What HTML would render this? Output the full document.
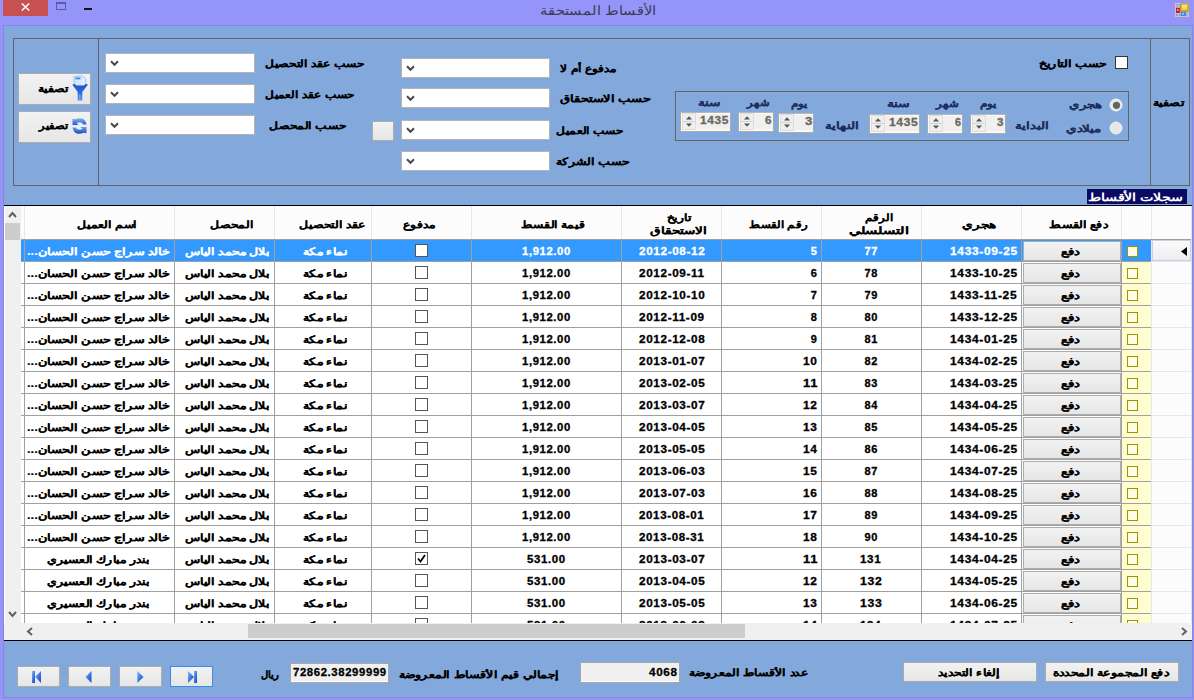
<!DOCTYPE html>
<html><head><meta charset="utf-8"><style>
html,body{margin:0;padding:0;}
body{width:1194px;height:700px;position:relative;overflow:hidden;background:#9595f9;font-family:'Liberation Sans',sans-serif;}
.t{position:absolute;white-space:nowrap;direction:rtl;line-height:20px;transform-origin:0 0;-webkit-text-stroke:0.12px currentColor;}
</style></head><body>
<div style="position:absolute;left:3px;top:0px;width:45px;height:16px;background:#c75050"></div><svg style="position:absolute;left:21px;top:3px" width="9" height="8" viewBox="0 0 9 8"><path d="M0.8 0.5 L8.2 7.5 M8.2 0.5 L0.8 7.5" stroke="#fff" stroke-width="1.5"/></svg><div style="position:absolute;left:56px;top:2px;width:10px;height:8px;border:1px solid #5a5aa8;border-top-width:2px;box-sizing:border-box"></div><div style="position:absolute;left:84px;top:8px;width:8px;height:2px;background:#111"></div><div class="t" style="left:539.67px;top:1.00px;font-size:13px;font-weight:normal;color:#3c3c50;transform:scaleX(1.1317);-webkit-text-stroke:0;">الأقساط المستحقة</div><svg style="position:absolute;left:1175px;top:3px" width="14" height="14" viewBox="0 0 14 14">
<defs><linearGradient id="ay" x1="0" x2="0" y1="0" y2="1"><stop offset="0" stop-color="#fff0a0"/><stop offset="1" stop-color="#f5c418"/></linearGradient></defs>
<rect x="0.5" y="0.5" width="13" height="13" fill="none" stroke="#c9c6b4" stroke-width="1"/>
<line x1="3.5" y1="0.5" x2="3.5" y2="13.5" stroke="#c9c6b4"/><line x1="0.5" y1="3" x2="5" y2="3" stroke="#c9c6b4"/>
<line x1="0.5" y1="10.5" x2="13.5" y2="10.5" stroke="#c9c6b4"/><line x1="12" y1="9" x2="12" y2="13.5" stroke="#c9c6b4"/>
<rect x="6" y="1" width="7" height="7" fill="url(#ay)" stroke="#c09a10" stroke-width="1.2"/>
<rect x="1" y="5" width="3.8" height="5" fill="#c81c1c"/><rect x="2" y="6" width="1.5" height="2" fill="#f0a0a0"/>
<rect x="6" y="9" width="5" height="4" fill="#4a88e0"/><rect x="7" y="10" width="2" height="1.5" fill="#a0c8f8"/>
</svg><div style="position:absolute;left:3px;top:25px;width:1190px;height:673px;background:#8686e2"></div><div style="position:absolute;left:4px;top:26px;width:1188px;height:671px;background:#83a8dc"></div><div style="position:absolute;left:13px;top:38px;width:1177px;height:148px;border:1px solid #646464;box-sizing:border-box"></div><div style="position:absolute;left:98px;top:38px;width:1px;height:148px;background:#646464"></div><div style="position:absolute;left:1150px;top:38px;width:1px;height:148px;background:#646464"></div><div style="position:absolute;left:18px;top:73px;width:73px;height:32px;background:linear-gradient(#f2f2f2,#e6e6e6);border:1px solid #acacac;box-sizing:border-box"></div><div style="position:absolute;left:18px;top:111px;width:73px;height:32px;background:linear-gradient(#f2f2f2,#e6e6e6);border:1px solid #acacac;box-sizing:border-box"></div><div class="t" style="left:38.00px;top:79.00px;font-size:10px;font-weight:bold;color:#000;transform:scaleX(1.2400);">تصفية</div><div class="t" style="left:39.13px;top:115.50px;font-size:10px;font-weight:bold;color:#000;transform:scaleX(1.1296);">تصفير</div><svg style="position:absolute;left:72px;top:75px" width="17" height="26" viewBox="0 0 17 26">
<defs><linearGradient id="fg" x1="0" x2="0" y1="0" y2="1"><stop offset="0" stop-color="#1d55c8"/><stop offset="0.6" stop-color="#2f6ee0"/><stop offset="1" stop-color="#5a95ee"/></linearGradient>
<linearGradient id="fd" x1="0" x2="1"><stop offset="0" stop-color="#cfe2fb"/><stop offset="1" stop-color="#e8f1fd"/></linearGradient></defs>
<path d="M2 1.5 L10 0.8 L13.8 4 L13.8 11 L2 11 Z" fill="url(#fd)" stroke="#9cc4f5" stroke-width="1"/>
<rect x="3.5" y="2.5" width="5" height="1.8" fill="#3f86ec"/>
<path d="M0.3 9.5 L3 9 L4 10.5 L12 10.5 L13.5 9 L16 9.5 L10.3 17 L10.3 25.5 L5.7 25.5 L5.7 17 Z" fill="url(#fg)"/>
<rect x="7" y="19" width="1.5" height="5" fill="#7fb0f4" opacity="0.7"/>
</svg><svg style="position:absolute;left:72px;top:118px" width="15" height="16" viewBox="0 0 15 16">
<defs><linearGradient id="rg1" x1="0" x2="0" y1="0" y2="1"><stop offset="0" stop-color="#8ab8f4"/><stop offset="1" stop-color="#1f5ad0"/></linearGradient>
<linearGradient id="rg2" x1="0" x2="0" y1="0" y2="1"><stop offset="0" stop-color="#6a9eee"/><stop offset="1" stop-color="#1a4cc0"/></linearGradient></defs>
<path d="M0.5 0.8 L3.5 1.3 Q6 -0.2 9.5 0.3 Q13.5 1.2 14.5 6.5 L11.3 6.5 Q10 4.3 7.2 4.3 Q5.2 4.4 4.6 5.6 L6.8 7 L0.5 7 Z" fill="url(#rg1)"/>
<path d="M14.5 15.2 L11.5 14.7 Q9 16.2 5.5 15.7 Q1.5 14.8 0.5 9.5 L3.7 9.5 Q5 11.7 7.8 11.7 Q9.8 11.6 10.4 10.4 L8.2 9 L14.5 9 Z" fill="url(#rg2)"/>
</svg><div style="position:absolute;left:105px;top:53px;width:150px;height:20px;background:#fff;border:1px solid #b4b4b4;box-sizing:border-box"></div><svg style="position:absolute;left:110px;top:60px" width="9" height="7" viewBox="0 0 9 7"><path d="M1 1.2 L4.5 4.8 L8 1.2" fill="none" stroke="#4a4a4a" stroke-width="2"/></svg><div style="position:absolute;left:105px;top:84px;width:150px;height:20px;background:#fff;border:1px solid #b4b4b4;box-sizing:border-box"></div><svg style="position:absolute;left:110px;top:91px" width="9" height="7" viewBox="0 0 9 7"><path d="M1 1.2 L4.5 4.8 L8 1.2" fill="none" stroke="#4a4a4a" stroke-width="2"/></svg><div style="position:absolute;left:105px;top:115px;width:150px;height:20px;background:#fff;border:1px solid #b4b4b4;box-sizing:border-box"></div><svg style="position:absolute;left:110px;top:122px" width="9" height="7" viewBox="0 0 9 7"><path d="M1 1.2 L4.5 4.8 L8 1.2" fill="none" stroke="#4a4a4a" stroke-width="2"/></svg><div class="t" style="left:264.60px;top:54.00px;font-size:10px;font-weight:bold;color:#000;transform:scaleX(1.2171);">حسب عقد التحصيل</div><div class="t" style="left:264.60px;top:85.00px;font-size:10px;font-weight:bold;color:#000;transform:scaleX(1.2027);">حسب عقد العميل</div><div class="t" style="left:268.60px;top:116.00px;font-size:10px;font-weight:bold;color:#000;transform:scaleX(1.2254);">حسب المحصل</div><div style="position:absolute;left:372px;top:121px;width:22px;height:20px;background:linear-gradient(#f2f2f2,#e6e6e6);border:1px solid #acacac;box-sizing:border-box"></div><div style="position:absolute;left:401px;top:58px;width:149px;height:20px;background:#fff;border:1px solid #b4b4b4;box-sizing:border-box"></div><svg style="position:absolute;left:406px;top:65px" width="9" height="7" viewBox="0 0 9 7"><path d="M1 1.2 L4.5 4.8 L8 1.2" fill="none" stroke="#4a4a4a" stroke-width="2"/></svg><div style="position:absolute;left:401px;top:88px;width:149px;height:20px;background:#fff;border:1px solid #b4b4b4;box-sizing:border-box"></div><svg style="position:absolute;left:406px;top:95px" width="9" height="7" viewBox="0 0 9 7"><path d="M1 1.2 L4.5 4.8 L8 1.2" fill="none" stroke="#4a4a4a" stroke-width="2"/></svg><div style="position:absolute;left:401px;top:120px;width:149px;height:20px;background:#fff;border:1px solid #b4b4b4;box-sizing:border-box"></div><svg style="position:absolute;left:406px;top:127px" width="9" height="7" viewBox="0 0 9 7"><path d="M1 1.2 L4.5 4.8 L8 1.2" fill="none" stroke="#4a4a4a" stroke-width="2"/></svg><div style="position:absolute;left:401px;top:151px;width:149px;height:20px;background:#fff;border:1px solid #b4b4b4;box-sizing:border-box"></div><svg style="position:absolute;left:406px;top:158px" width="9" height="7" viewBox="0 0 9 7"><path d="M1 1.2 L4.5 4.8 L8 1.2" fill="none" stroke="#4a4a4a" stroke-width="2"/></svg><div class="t" style="left:560.30px;top:59.00px;font-size:10px;font-weight:bold;color:#000;transform:scaleX(1.2106);">مدفوع أم لا</div><div class="t" style="left:560.20px;top:89.00px;font-size:10px;font-weight:bold;color:#000;transform:scaleX(1.3014);">حسب الاستحقاق</div><div class="t" style="left:555.50px;top:120.50px;font-size:10px;font-weight:bold;color:#000;transform:scaleX(1.2107);">حسب العميل</div><div class="t" style="left:555.50px;top:151.70px;font-size:10px;font-weight:bold;color:#000;transform:scaleX(1.2576);">حسب الشركة</div><div style="position:absolute;left:1115px;top:56px;width:13px;height:13px;background:#fff;border:1px solid #333;box-sizing:border-box"></div><div class="t" style="left:1038.60px;top:54.00px;font-size:10px;font-weight:bold;color:#000;transform:scaleX(1.2574);">حسب التاريخ</div><div class="t" style="left:1153.30px;top:93.00px;font-size:10px;font-weight:bold;color:#000;transform:scaleX(1.2560);">تصفية</div><div style="position:absolute;left:675px;top:91px;width:454px;height:50px;border:1px solid #646464;box-sizing:border-box"></div><svg style="position:absolute;left:1109px;top:98px" width="14" height="14" viewBox="0 0 14 14">
<circle cx="7" cy="7" r="6" fill="#e8e8e8" stroke="#f4f4f4" stroke-width="1"/><circle cx="7.5" cy="7.3" r="3.6" fill="#626262"/></svg><svg style="position:absolute;left:1109px;top:121px" width="14" height="14" viewBox="0 0 14 14">
<circle cx="7" cy="7" r="6" fill="#e6e6e6" stroke="#f0f0f0" stroke-width="1"/></svg><div class="t" style="left:1069.30px;top:95.30px;font-size:10px;font-weight:bold;color:#1e2d5a;transform:scaleX(1.3200);">هجري</div><div class="t" style="left:1066.40px;top:119.00px;font-size:10px;font-weight:bold;color:#1e2d5a;transform:scaleX(1.3500);">ميلادي</div><div class="t" style="left:1015.00px;top:116.00px;font-size:10px;font-weight:bold;color:#1e2d5a;transform:scaleX(1.3458);">البداية</div><div class="t" style="left:825.00px;top:116.00px;font-size:10px;font-weight:bold;color:#1e2d5a;transform:scaleX(1.3458);">النهاية</div><div style="position:absolute;left:970px;top:114px;width:36px;height:20px;background:#f0f0f0;border:1px solid #ababab;border-top-color:#b8b8b8;box-shadow:inset 1px 1px 0 #fbfbfb, inset 0 -2px 0 #fafafa;box-sizing:border-box"></div><svg style="position:absolute;left:972px;top:115px" width="14" height="17" viewBox="0 0 14 17"><rect x="0.5" y="0.5" width="13" height="16" fill="#efefef" stroke="#dedede"/><line x1="1" y1="8.5" x2="13" y2="8.5" stroke="#d4d4d4"/><path d="M4 6.5 L7 3.3 L10 6.5 Z" fill="#555"/><path d="M4 10.5 L7 13.7 L10 10.5 Z" fill="#555"/></svg><div class="t" style="left:997.40px;top:112.00px;font-size:11px;font-weight:bold;letter-spacing:0.6px;-webkit-text-stroke:0.3px currentColor;color:#6b675f;transform:scaleX(1.0500);">3</div><div style="position:absolute;left:927px;top:114px;width:36px;height:20px;background:#f0f0f0;border:1px solid #ababab;border-top-color:#b8b8b8;box-shadow:inset 1px 1px 0 #fbfbfb, inset 0 -2px 0 #fafafa;box-sizing:border-box"></div><svg style="position:absolute;left:929px;top:115px" width="14" height="17" viewBox="0 0 14 17"><rect x="0.5" y="0.5" width="13" height="16" fill="#efefef" stroke="#dedede"/><line x1="1" y1="8.5" x2="13" y2="8.5" stroke="#d4d4d4"/><path d="M4 6.5 L7 3.3 L10 6.5 Z" fill="#555"/><path d="M4 10.5 L7 13.7 L10 10.5 Z" fill="#555"/></svg><div class="t" style="left:954.60px;top:112.00px;font-size:11px;font-weight:bold;letter-spacing:0.6px;-webkit-text-stroke:0.3px currentColor;color:#6b675f;transform:scaleX(0.9833);">6</div><div style="position:absolute;left:869px;top:114px;width:51px;height:20px;background:#f0f0f0;border:1px solid #ababab;border-top-color:#b8b8b8;box-shadow:inset 1px 1px 0 #fbfbfb, inset 0 -2px 0 #fafafa;box-sizing:border-box"></div><svg style="position:absolute;left:871px;top:115px" width="14" height="17" viewBox="0 0 14 17"><rect x="0.5" y="0.5" width="13" height="16" fill="#efefef" stroke="#dedede"/><line x1="1" y1="8.5" x2="13" y2="8.5" stroke="#d4d4d4"/><path d="M4 6.5 L7 3.3 L10 6.5 Z" fill="#555"/><path d="M4 10.5 L7 13.7 L10 10.5 Z" fill="#555"/></svg><div class="t" style="left:889.41px;top:112.00px;font-size:11px;font-weight:bold;letter-spacing:0.6px;-webkit-text-stroke:0.3px currentColor;color:#6b675f;transform:scaleX(1.0920);">1435</div><div class="t" style="left:979.80px;top:94.00px;font-size:10px;font-weight:bold;color:#1e2d5a;transform:scaleX(1.1929);">يوم</div><div class="t" style="left:935.67px;top:94.00px;font-size:10px;font-weight:bold;color:#1e2d5a;transform:scaleX(1.1750);">شهر</div><div class="t" style="left:887.00px;top:94.00px;font-size:10px;font-weight:bold;color:#1e2d5a;transform:scaleX(1.4000);">سنة</div><div style="position:absolute;left:778px;top:113px;width:36px;height:20px;background:#f0f0f0;border:1px solid #ababab;border-top-color:#b8b8b8;box-shadow:inset 1px 1px 0 #fbfbfb, inset 0 -2px 0 #fafafa;box-sizing:border-box"></div><svg style="position:absolute;left:780px;top:114px" width="14" height="17" viewBox="0 0 14 17"><rect x="0.5" y="0.5" width="13" height="16" fill="#efefef" stroke="#dedede"/><line x1="1" y1="8.5" x2="13" y2="8.5" stroke="#d4d4d4"/><path d="M4 6.5 L7 3.3 L10 6.5 Z" fill="#555"/><path d="M4 10.5 L7 13.7 L10 10.5 Z" fill="#555"/></svg><div class="t" style="left:804.80px;top:111.00px;font-size:11px;font-weight:bold;letter-spacing:0.6px;-webkit-text-stroke:0.3px currentColor;color:#6b675f;transform:scaleX(1.2000);">3</div><div style="position:absolute;left:738px;top:112px;width:36px;height:20px;background:#f0f0f0;border:1px solid #ababab;border-top-color:#b8b8b8;box-shadow:inset 1px 1px 0 #fbfbfb, inset 0 -2px 0 #fafafa;box-sizing:border-box"></div><svg style="position:absolute;left:740px;top:113px" width="14" height="17" viewBox="0 0 14 17"><rect x="0.5" y="0.5" width="13" height="16" fill="#efefef" stroke="#dedede"/><line x1="1" y1="8.5" x2="13" y2="8.5" stroke="#d4d4d4"/><path d="M4 6.5 L7 3.3 L10 6.5 Z" fill="#555"/><path d="M4 10.5 L7 13.7 L10 10.5 Z" fill="#555"/></svg><div class="t" style="left:765.00px;top:110.40px;font-size:11px;font-weight:bold;letter-spacing:0.6px;-webkit-text-stroke:0.3px currentColor;color:#6b675f;transform:scaleX(1.0500);">6</div><div style="position:absolute;left:680px;top:112px;width:51px;height:20px;background:#f0f0f0;border:1px solid #ababab;border-top-color:#b8b8b8;box-shadow:inset 1px 1px 0 #fbfbfb, inset 0 -2px 0 #fafafa;box-sizing:border-box"></div><svg style="position:absolute;left:682px;top:113px" width="14" height="17" viewBox="0 0 14 17"><rect x="0.5" y="0.5" width="13" height="16" fill="#efefef" stroke="#dedede"/><line x1="1" y1="8.5" x2="13" y2="8.5" stroke="#d4d4d4"/><path d="M4 6.5 L7 3.3 L10 6.5 Z" fill="#555"/><path d="M4 10.5 L7 13.7 L10 10.5 Z" fill="#555"/></svg><div class="t" style="left:700.42px;top:110.40px;font-size:11px;font-weight:bold;letter-spacing:0.6px;-webkit-text-stroke:0.3px currentColor;color:#6b675f;transform:scaleX(1.0840);">1435</div><div class="t" style="left:791.00px;top:93.50px;font-size:10px;font-weight:bold;color:#1e2d5a;transform:scaleX(1.1714);">يوم</div><div class="t" style="left:747.15px;top:93.40px;font-size:10px;font-weight:bold;color:#1e2d5a;transform:scaleX(1.1500);">شهر</div><div class="t" style="left:698.00px;top:93.00px;font-size:10px;font-weight:bold;color:#1e2d5a;transform:scaleX(1.3750);">سنة</div><div style="position:absolute;left:1087px;top:189px;width:100px;height:15px;background:#0a0a62"></div><div class="t" style="left:1087.70px;top:187.00px;font-size:11px;font-weight:bold;-webkit-text-stroke:0;color:#fff;transform:scaleX(1.3000);">سجلات الأقساط</div><div style="position:absolute;left:4px;top:205px;width:1188px;height:1px;background:#000"></div><div style="position:absolute;left:4px;top:206px;width:1188px;height:433px;background:#fff"></div><div style="position:absolute;left:4px;top:206px;width:17px;height:417px;background:#f0f0f0;border-left:1px solid #fff;box-sizing:border-box"></div><svg style="position:absolute;left:8px;top:211px" width="9" height="7" viewBox="0 0 9 7"><path d="M1 6 L4.5 2 L8 6" fill="none" stroke="#606060" stroke-width="2"/></svg><div style="position:absolute;left:5px;top:223px;width:15px;height:17px;background:#cdcdcd"></div><svg style="position:absolute;left:8px;top:611px" width="9" height="7" viewBox="0 0 9 7"><path d="M1 1 L4.5 5 L8 1" fill="none" stroke="#606060" stroke-width="2"/></svg><div style="position:absolute;left:21px;top:206px;width:1171px;height:33px;background:#fcfcfc"></div><div style="position:absolute;left:24px;top:206px;width:1px;height:33px;background:#dfe8f3"></div><div style="position:absolute;left:174px;top:206px;width:1px;height:33px;background:#dfe8f3"></div><div style="position:absolute;left:274px;top:206px;width:1px;height:33px;background:#dfe8f3"></div><div style="position:absolute;left:371px;top:206px;width:1px;height:33px;background:#dfe8f3"></div><div style="position:absolute;left:471px;top:206px;width:1px;height:33px;background:#dfe8f3"></div><div style="position:absolute;left:621px;top:206px;width:1px;height:33px;background:#dfe8f3"></div><div style="position:absolute;left:721px;top:206px;width:1px;height:33px;background:#dfe8f3"></div><div style="position:absolute;left:821px;top:206px;width:1px;height:33px;background:#dfe8f3"></div><div style="position:absolute;left:921px;top:206px;width:1px;height:33px;background:#dfe8f3"></div><div style="position:absolute;left:1021px;top:206px;width:1px;height:33px;background:#dfe8f3"></div><div style="position:absolute;left:1121px;top:206px;width:1px;height:33px;background:#dfe8f3"></div><div style="position:absolute;left:1151px;top:206px;width:1px;height:33px;background:#dfe8f3"></div><div style="position:absolute;left:21px;top:239px;width:1171px;height:1px;background:#a0a0a0"></div><div class="t" style="left:76.60px;top:215.00px;font-size:10px;font-weight:bold;color:#000;transform:scaleX(1.2312);">اسم العميل</div><div class="t" style="left:210.40px;top:215.00px;font-size:10px;font-weight:bold;color:#000;transform:scaleX(1.2382);">المحصل</div><div class="t" style="left:299.40px;top:215.00px;font-size:10px;font-weight:bold;color:#000;transform:scaleX(1.2377);">عقد التحصيل</div><div class="t" style="left:403.40px;top:215.00px;font-size:10px;font-weight:bold;color:#000;transform:scaleX(1.2346);">مدفوع</div><div class="t" style="left:521.00px;top:215.00px;font-size:10px;font-weight:bold;color:#000;transform:scaleX(1.2308);">قيمة القسط</div><div class="t" style="left:666.80px;top:208.00px;font-size:10px;font-weight:bold;color:#000;transform:scaleX(1.2250);">تاريخ</div><div class="t" style="left:650.40px;top:221.00px;font-size:10px;font-weight:bold;color:#000;transform:scaleX(1.3561);">الاستحقاق</div><div class="t" style="left:749.00px;top:215.00px;font-size:10px;font-weight:bold;color:#000;transform:scaleX(1.1740);">رقم القسط</div><div class="t" style="left:864.80px;top:208.00px;font-size:10px;font-weight:bold;color:#000;transform:scaleX(1.1783);">الرقم</div><div class="t" style="left:849.00px;top:221.00px;font-size:10px;font-weight:bold;color:#000;transform:scaleX(1.4625);">التسلسلي</div><div class="t" style="left:961.60px;top:215.00px;font-size:10px;font-weight:bold;color:#000;transform:scaleX(1.3600);">هجري</div><div class="t" style="left:1049.00px;top:215.00px;font-size:10px;font-weight:bold;color:#000;transform:scaleX(1.2553);">دفع القسط</div><div style="position:absolute;left:0px;top:240px;width:1192px;height:383px;overflow:hidden"><div style="position:absolute;left:0;top:-240px;width:1192px;height:700px"><div style="position:absolute;left:21px;top:240px;width:1130px;height:21px;background:#3399ff"></div><div style="position:absolute;left:1151px;top:240px;width:41px;height:21px;background:#fcfcfc"></div><div style="position:absolute;left:1151px;top:261px;width:41px;height:1px;background:#dfe8f3"></div><div style="position:absolute;left:1151px;top:240px;width:1px;height:22px;background:#dfe8f3"></div><div style="position:absolute;left:21px;top:261px;width:1130px;height:1px;background:#a0a0a0"></div><div style="position:absolute;left:24px;top:240px;width:1px;height:22px;background:#a0a0a0"></div><div style="position:absolute;left:174px;top:240px;width:1px;height:22px;background:#a0a0a0"></div><div style="position:absolute;left:274px;top:240px;width:1px;height:22px;background:#a0a0a0"></div><div style="position:absolute;left:371px;top:240px;width:1px;height:22px;background:#a0a0a0"></div><div style="position:absolute;left:471px;top:240px;width:1px;height:22px;background:#a0a0a0"></div><div style="position:absolute;left:621px;top:240px;width:1px;height:22px;background:#a0a0a0"></div><div style="position:absolute;left:721px;top:240px;width:1px;height:22px;background:#a0a0a0"></div><div style="position:absolute;left:821px;top:240px;width:1px;height:22px;background:#a0a0a0"></div><div style="position:absolute;left:921px;top:240px;width:1px;height:22px;background:#a0a0a0"></div><div style="position:absolute;left:1021px;top:240px;width:1px;height:22px;background:#a0a0a0"></div><div style="position:absolute;left:1121px;top:240px;width:1px;height:22px;background:#a0a0a0"></div><div class="t" style="left:26.71px;top:242.00px;font-size:10px;font-weight:bold;color:#fff;transform:scaleX(1.2873);">خالد سراج حسن الحسان...</div><div class="t" style="left:185.40px;top:242.00px;font-size:10px;font-weight:bold;color:#fff;transform:scaleX(1.2478);">بلال محمد الياس</div><div class="t" style="left:302.50px;top:242.00px;font-size:10px;font-weight:bold;color:#fff;transform:scaleX(1.2429);">نماء مكة</div><div style="position:absolute;left:415px;top:244px;width:13px;height:13px;background:#fff;border:1px solid #555;box-sizing:border-box"></div><div class="t" style="left:521.57px;top:241.00px;font-size:11px;font-weight:bold;letter-spacing:0.6px;-webkit-text-stroke:0.3px currentColor;color:#fff;transform:scaleX(1.0261);">1,912.00</div><div class="t" style="left:638.60px;top:241.00px;font-size:11px;font-weight:bold;letter-spacing:0.6px;-webkit-text-stroke:0.3px currentColor;color:#fff;transform:scaleX(1.0656);">2012-08-12</div><div class="t" style="left:810.70px;top:241.00px;font-size:11px;font-weight:bold;letter-spacing:0.6px;-webkit-text-stroke:0.3px currentColor;color:#fff;transform:scaleX(1.0000);">5</div><div class="t" style="left:864.50px;top:241.00px;font-size:11px;font-weight:bold;letter-spacing:0.6px;-webkit-text-stroke:0.3px currentColor;color:#fff;transform:scaleX(1.0000);">77</div><div class="t" style="left:950.31px;top:241.00px;font-size:11px;font-weight:bold;letter-spacing:0.6px;-webkit-text-stroke:0.3px currentColor;color:#fff;transform:scaleX(1.0900);">1433-09-25</div><div style="position:absolute;left:1023px;top:241px;width:98px;height:20px;background:linear-gradient(#f2f2f2,#e6e6e6);border:1px solid #acacac;box-sizing:border-box"></div><div class="t" style="left:1061.30px;top:242.00px;font-size:10px;font-weight:bold;color:#000;transform:scaleX(1.3357);">دفع</div><div style="position:absolute;left:1127px;top:246px;width:11px;height:11px;background:#fdfde6;border:1.5px solid #9a9a00;box-sizing:border-box"></div><div style="position:absolute;left:1152px;top:240px;width:39px;height:21px;background:linear-gradient(#fbfbfb,#eeeeee);border:1px solid #c8d2de;box-sizing:border-box"></div><svg style="position:absolute;left:1181px;top:247px" width="6" height="9" viewBox="0 0 6 9"><path d="M6 0 L0 4.5 L6 9 Z" fill="#000"/></svg><div style="position:absolute;left:1121px;top:262px;width:30px;height:21px;background:#fffdd0"></div><div style="position:absolute;left:1151px;top:262px;width:41px;height:21px;background:#fcfcfc"></div><div style="position:absolute;left:1151px;top:283px;width:41px;height:1px;background:#dfe8f3"></div><div style="position:absolute;left:1151px;top:262px;width:1px;height:22px;background:#dfe8f3"></div><div style="position:absolute;left:21px;top:283px;width:1130px;height:1px;background:#a0a0a0"></div><div style="position:absolute;left:24px;top:262px;width:1px;height:22px;background:#a0a0a0"></div><div style="position:absolute;left:174px;top:262px;width:1px;height:22px;background:#a0a0a0"></div><div style="position:absolute;left:274px;top:262px;width:1px;height:22px;background:#a0a0a0"></div><div style="position:absolute;left:371px;top:262px;width:1px;height:22px;background:#a0a0a0"></div><div style="position:absolute;left:471px;top:262px;width:1px;height:22px;background:#a0a0a0"></div><div style="position:absolute;left:621px;top:262px;width:1px;height:22px;background:#a0a0a0"></div><div style="position:absolute;left:721px;top:262px;width:1px;height:22px;background:#a0a0a0"></div><div style="position:absolute;left:821px;top:262px;width:1px;height:22px;background:#a0a0a0"></div><div style="position:absolute;left:921px;top:262px;width:1px;height:22px;background:#a0a0a0"></div><div style="position:absolute;left:1021px;top:262px;width:1px;height:22px;background:#a0a0a0"></div><div style="position:absolute;left:1121px;top:262px;width:1px;height:22px;background:#a0a0a0"></div><div class="t" style="left:26.71px;top:264.00px;font-size:10px;font-weight:bold;color:#000;transform:scaleX(1.2873);">خالد سراج حسن الحسان...</div><div class="t" style="left:185.40px;top:264.00px;font-size:10px;font-weight:bold;color:#000;transform:scaleX(1.2478);">بلال محمد الياس</div><div class="t" style="left:302.50px;top:264.00px;font-size:10px;font-weight:bold;color:#000;transform:scaleX(1.2429);">نماء مكة</div><div style="position:absolute;left:415px;top:266px;width:13px;height:13px;background:#fff;border:1px solid #555;box-sizing:border-box"></div><div class="t" style="left:521.57px;top:263.00px;font-size:11px;font-weight:bold;letter-spacing:0.6px;-webkit-text-stroke:0.3px currentColor;color:#000;transform:scaleX(1.0261);">1,912.00</div><div class="t" style="left:638.60px;top:263.00px;font-size:11px;font-weight:bold;letter-spacing:0.6px;-webkit-text-stroke:0.3px currentColor;color:#000;transform:scaleX(1.0656);">2012-09-11</div><div class="t" style="left:810.70px;top:263.00px;font-size:11px;font-weight:bold;letter-spacing:0.6px;-webkit-text-stroke:0.3px currentColor;color:#000;transform:scaleX(1.0000);">6</div><div class="t" style="left:864.50px;top:263.00px;font-size:11px;font-weight:bold;letter-spacing:0.6px;-webkit-text-stroke:0.3px currentColor;color:#000;transform:scaleX(1.0000);">78</div><div class="t" style="left:950.31px;top:263.00px;font-size:11px;font-weight:bold;letter-spacing:0.6px;-webkit-text-stroke:0.3px currentColor;color:#000;transform:scaleX(1.0900);">1433-10-25</div><div style="position:absolute;left:1023px;top:263px;width:98px;height:20px;background:linear-gradient(#f2f2f2,#e6e6e6);border:1px solid #acacac;box-sizing:border-box"></div><div class="t" style="left:1061.30px;top:264.00px;font-size:10px;font-weight:bold;color:#000;transform:scaleX(1.3357);">دفع</div><div style="position:absolute;left:1127px;top:268px;width:11px;height:11px;background:#fdfde6;border:1.5px solid #9a9a00;box-sizing:border-box"></div><div style="position:absolute;left:1121px;top:284px;width:30px;height:21px;background:#fffdd0"></div><div style="position:absolute;left:1151px;top:284px;width:41px;height:21px;background:#fcfcfc"></div><div style="position:absolute;left:1151px;top:305px;width:41px;height:1px;background:#dfe8f3"></div><div style="position:absolute;left:1151px;top:284px;width:1px;height:22px;background:#dfe8f3"></div><div style="position:absolute;left:21px;top:305px;width:1130px;height:1px;background:#a0a0a0"></div><div style="position:absolute;left:24px;top:284px;width:1px;height:22px;background:#a0a0a0"></div><div style="position:absolute;left:174px;top:284px;width:1px;height:22px;background:#a0a0a0"></div><div style="position:absolute;left:274px;top:284px;width:1px;height:22px;background:#a0a0a0"></div><div style="position:absolute;left:371px;top:284px;width:1px;height:22px;background:#a0a0a0"></div><div style="position:absolute;left:471px;top:284px;width:1px;height:22px;background:#a0a0a0"></div><div style="position:absolute;left:621px;top:284px;width:1px;height:22px;background:#a0a0a0"></div><div style="position:absolute;left:721px;top:284px;width:1px;height:22px;background:#a0a0a0"></div><div style="position:absolute;left:821px;top:284px;width:1px;height:22px;background:#a0a0a0"></div><div style="position:absolute;left:921px;top:284px;width:1px;height:22px;background:#a0a0a0"></div><div style="position:absolute;left:1021px;top:284px;width:1px;height:22px;background:#a0a0a0"></div><div style="position:absolute;left:1121px;top:284px;width:1px;height:22px;background:#a0a0a0"></div><div class="t" style="left:26.71px;top:286.00px;font-size:10px;font-weight:bold;color:#000;transform:scaleX(1.2873);">خالد سراج حسن الحسان...</div><div class="t" style="left:185.40px;top:286.00px;font-size:10px;font-weight:bold;color:#000;transform:scaleX(1.2478);">بلال محمد الياس</div><div class="t" style="left:302.50px;top:286.00px;font-size:10px;font-weight:bold;color:#000;transform:scaleX(1.2429);">نماء مكة</div><div style="position:absolute;left:415px;top:288px;width:13px;height:13px;background:#fff;border:1px solid #555;box-sizing:border-box"></div><div class="t" style="left:521.57px;top:285.00px;font-size:11px;font-weight:bold;letter-spacing:0.6px;-webkit-text-stroke:0.3px currentColor;color:#000;transform:scaleX(1.0261);">1,912.00</div><div class="t" style="left:638.60px;top:285.00px;font-size:11px;font-weight:bold;letter-spacing:0.6px;-webkit-text-stroke:0.3px currentColor;color:#000;transform:scaleX(1.0656);">2012-10-10</div><div class="t" style="left:810.70px;top:285.00px;font-size:11px;font-weight:bold;letter-spacing:0.6px;-webkit-text-stroke:0.3px currentColor;color:#000;transform:scaleX(1.0000);">7</div><div class="t" style="left:864.50px;top:285.00px;font-size:11px;font-weight:bold;letter-spacing:0.6px;-webkit-text-stroke:0.3px currentColor;color:#000;transform:scaleX(1.0000);">79</div><div class="t" style="left:950.31px;top:285.00px;font-size:11px;font-weight:bold;letter-spacing:0.6px;-webkit-text-stroke:0.3px currentColor;color:#000;transform:scaleX(1.0900);">1433-11-25</div><div style="position:absolute;left:1023px;top:285px;width:98px;height:20px;background:linear-gradient(#f2f2f2,#e6e6e6);border:1px solid #acacac;box-sizing:border-box"></div><div class="t" style="left:1061.30px;top:286.00px;font-size:10px;font-weight:bold;color:#000;transform:scaleX(1.3357);">دفع</div><div style="position:absolute;left:1127px;top:290px;width:11px;height:11px;background:#fdfde6;border:1.5px solid #9a9a00;box-sizing:border-box"></div><div style="position:absolute;left:1121px;top:306px;width:30px;height:21px;background:#fffdd0"></div><div style="position:absolute;left:1151px;top:306px;width:41px;height:21px;background:#fcfcfc"></div><div style="position:absolute;left:1151px;top:327px;width:41px;height:1px;background:#dfe8f3"></div><div style="position:absolute;left:1151px;top:306px;width:1px;height:22px;background:#dfe8f3"></div><div style="position:absolute;left:21px;top:327px;width:1130px;height:1px;background:#a0a0a0"></div><div style="position:absolute;left:24px;top:306px;width:1px;height:22px;background:#a0a0a0"></div><div style="position:absolute;left:174px;top:306px;width:1px;height:22px;background:#a0a0a0"></div><div style="position:absolute;left:274px;top:306px;width:1px;height:22px;background:#a0a0a0"></div><div style="position:absolute;left:371px;top:306px;width:1px;height:22px;background:#a0a0a0"></div><div style="position:absolute;left:471px;top:306px;width:1px;height:22px;background:#a0a0a0"></div><div style="position:absolute;left:621px;top:306px;width:1px;height:22px;background:#a0a0a0"></div><div style="position:absolute;left:721px;top:306px;width:1px;height:22px;background:#a0a0a0"></div><div style="position:absolute;left:821px;top:306px;width:1px;height:22px;background:#a0a0a0"></div><div style="position:absolute;left:921px;top:306px;width:1px;height:22px;background:#a0a0a0"></div><div style="position:absolute;left:1021px;top:306px;width:1px;height:22px;background:#a0a0a0"></div><div style="position:absolute;left:1121px;top:306px;width:1px;height:22px;background:#a0a0a0"></div><div class="t" style="left:26.71px;top:308.00px;font-size:10px;font-weight:bold;color:#000;transform:scaleX(1.2873);">خالد سراج حسن الحسان...</div><div class="t" style="left:185.40px;top:308.00px;font-size:10px;font-weight:bold;color:#000;transform:scaleX(1.2478);">بلال محمد الياس</div><div class="t" style="left:302.50px;top:308.00px;font-size:10px;font-weight:bold;color:#000;transform:scaleX(1.2429);">نماء مكة</div><div style="position:absolute;left:415px;top:310px;width:13px;height:13px;background:#fff;border:1px solid #555;box-sizing:border-box"></div><div class="t" style="left:521.57px;top:307.00px;font-size:11px;font-weight:bold;letter-spacing:0.6px;-webkit-text-stroke:0.3px currentColor;color:#000;transform:scaleX(1.0261);">1,912.00</div><div class="t" style="left:638.60px;top:307.00px;font-size:11px;font-weight:bold;letter-spacing:0.6px;-webkit-text-stroke:0.3px currentColor;color:#000;transform:scaleX(1.0656);">2012-11-09</div><div class="t" style="left:810.70px;top:307.00px;font-size:11px;font-weight:bold;letter-spacing:0.6px;-webkit-text-stroke:0.3px currentColor;color:#000;transform:scaleX(1.0000);">8</div><div class="t" style="left:864.50px;top:307.00px;font-size:11px;font-weight:bold;letter-spacing:0.6px;-webkit-text-stroke:0.3px currentColor;color:#000;transform:scaleX(1.0000);">80</div><div class="t" style="left:950.31px;top:307.00px;font-size:11px;font-weight:bold;letter-spacing:0.6px;-webkit-text-stroke:0.3px currentColor;color:#000;transform:scaleX(1.0900);">1433-12-25</div><div style="position:absolute;left:1023px;top:307px;width:98px;height:20px;background:linear-gradient(#f2f2f2,#e6e6e6);border:1px solid #acacac;box-sizing:border-box"></div><div class="t" style="left:1061.30px;top:308.00px;font-size:10px;font-weight:bold;color:#000;transform:scaleX(1.3357);">دفع</div><div style="position:absolute;left:1127px;top:312px;width:11px;height:11px;background:#fdfde6;border:1.5px solid #9a9a00;box-sizing:border-box"></div><div style="position:absolute;left:1121px;top:328px;width:30px;height:21px;background:#fffdd0"></div><div style="position:absolute;left:1151px;top:328px;width:41px;height:21px;background:#fcfcfc"></div><div style="position:absolute;left:1151px;top:349px;width:41px;height:1px;background:#dfe8f3"></div><div style="position:absolute;left:1151px;top:328px;width:1px;height:22px;background:#dfe8f3"></div><div style="position:absolute;left:21px;top:349px;width:1130px;height:1px;background:#a0a0a0"></div><div style="position:absolute;left:24px;top:328px;width:1px;height:22px;background:#a0a0a0"></div><div style="position:absolute;left:174px;top:328px;width:1px;height:22px;background:#a0a0a0"></div><div style="position:absolute;left:274px;top:328px;width:1px;height:22px;background:#a0a0a0"></div><div style="position:absolute;left:371px;top:328px;width:1px;height:22px;background:#a0a0a0"></div><div style="position:absolute;left:471px;top:328px;width:1px;height:22px;background:#a0a0a0"></div><div style="position:absolute;left:621px;top:328px;width:1px;height:22px;background:#a0a0a0"></div><div style="position:absolute;left:721px;top:328px;width:1px;height:22px;background:#a0a0a0"></div><div style="position:absolute;left:821px;top:328px;width:1px;height:22px;background:#a0a0a0"></div><div style="position:absolute;left:921px;top:328px;width:1px;height:22px;background:#a0a0a0"></div><div style="position:absolute;left:1021px;top:328px;width:1px;height:22px;background:#a0a0a0"></div><div style="position:absolute;left:1121px;top:328px;width:1px;height:22px;background:#a0a0a0"></div><div class="t" style="left:26.71px;top:330.00px;font-size:10px;font-weight:bold;color:#000;transform:scaleX(1.2873);">خالد سراج حسن الحسان...</div><div class="t" style="left:185.40px;top:330.00px;font-size:10px;font-weight:bold;color:#000;transform:scaleX(1.2478);">بلال محمد الياس</div><div class="t" style="left:302.50px;top:330.00px;font-size:10px;font-weight:bold;color:#000;transform:scaleX(1.2429);">نماء مكة</div><div style="position:absolute;left:415px;top:332px;width:13px;height:13px;background:#fff;border:1px solid #555;box-sizing:border-box"></div><div class="t" style="left:521.57px;top:329.00px;font-size:11px;font-weight:bold;letter-spacing:0.6px;-webkit-text-stroke:0.3px currentColor;color:#000;transform:scaleX(1.0261);">1,912.00</div><div class="t" style="left:638.60px;top:329.00px;font-size:11px;font-weight:bold;letter-spacing:0.6px;-webkit-text-stroke:0.3px currentColor;color:#000;transform:scaleX(1.0656);">2012-12-08</div><div class="t" style="left:810.70px;top:329.00px;font-size:11px;font-weight:bold;letter-spacing:0.6px;-webkit-text-stroke:0.3px currentColor;color:#000;transform:scaleX(1.0000);">9</div><div class="t" style="left:864.50px;top:329.00px;font-size:11px;font-weight:bold;letter-spacing:0.6px;-webkit-text-stroke:0.3px currentColor;color:#000;transform:scaleX(1.0000);">81</div><div class="t" style="left:950.31px;top:329.00px;font-size:11px;font-weight:bold;letter-spacing:0.6px;-webkit-text-stroke:0.3px currentColor;color:#000;transform:scaleX(1.0900);">1434-01-25</div><div style="position:absolute;left:1023px;top:329px;width:98px;height:20px;background:linear-gradient(#f2f2f2,#e6e6e6);border:1px solid #acacac;box-sizing:border-box"></div><div class="t" style="left:1061.30px;top:330.00px;font-size:10px;font-weight:bold;color:#000;transform:scaleX(1.3357);">دفع</div><div style="position:absolute;left:1127px;top:334px;width:11px;height:11px;background:#fdfde6;border:1.5px solid #9a9a00;box-sizing:border-box"></div><div style="position:absolute;left:1121px;top:350px;width:30px;height:21px;background:#fffdd0"></div><div style="position:absolute;left:1151px;top:350px;width:41px;height:21px;background:#fcfcfc"></div><div style="position:absolute;left:1151px;top:371px;width:41px;height:1px;background:#dfe8f3"></div><div style="position:absolute;left:1151px;top:350px;width:1px;height:22px;background:#dfe8f3"></div><div style="position:absolute;left:21px;top:371px;width:1130px;height:1px;background:#a0a0a0"></div><div style="position:absolute;left:24px;top:350px;width:1px;height:22px;background:#a0a0a0"></div><div style="position:absolute;left:174px;top:350px;width:1px;height:22px;background:#a0a0a0"></div><div style="position:absolute;left:274px;top:350px;width:1px;height:22px;background:#a0a0a0"></div><div style="position:absolute;left:371px;top:350px;width:1px;height:22px;background:#a0a0a0"></div><div style="position:absolute;left:471px;top:350px;width:1px;height:22px;background:#a0a0a0"></div><div style="position:absolute;left:621px;top:350px;width:1px;height:22px;background:#a0a0a0"></div><div style="position:absolute;left:721px;top:350px;width:1px;height:22px;background:#a0a0a0"></div><div style="position:absolute;left:821px;top:350px;width:1px;height:22px;background:#a0a0a0"></div><div style="position:absolute;left:921px;top:350px;width:1px;height:22px;background:#a0a0a0"></div><div style="position:absolute;left:1021px;top:350px;width:1px;height:22px;background:#a0a0a0"></div><div style="position:absolute;left:1121px;top:350px;width:1px;height:22px;background:#a0a0a0"></div><div class="t" style="left:26.71px;top:352.00px;font-size:10px;font-weight:bold;color:#000;transform:scaleX(1.2873);">خالد سراج حسن الحسان...</div><div class="t" style="left:185.40px;top:352.00px;font-size:10px;font-weight:bold;color:#000;transform:scaleX(1.2478);">بلال محمد الياس</div><div class="t" style="left:302.50px;top:352.00px;font-size:10px;font-weight:bold;color:#000;transform:scaleX(1.2429);">نماء مكة</div><div style="position:absolute;left:415px;top:354px;width:13px;height:13px;background:#fff;border:1px solid #555;box-sizing:border-box"></div><div class="t" style="left:521.57px;top:351.00px;font-size:11px;font-weight:bold;letter-spacing:0.6px;-webkit-text-stroke:0.3px currentColor;color:#000;transform:scaleX(1.0261);">1,912.00</div><div class="t" style="left:638.60px;top:351.00px;font-size:11px;font-weight:bold;letter-spacing:0.6px;-webkit-text-stroke:0.3px currentColor;color:#000;transform:scaleX(1.0656);">2013-01-07</div><div class="t" style="left:802.62px;top:351.00px;font-size:11px;font-weight:bold;letter-spacing:0.6px;-webkit-text-stroke:0.3px currentColor;color:#000;transform:scaleX(1.0833);">10</div><div class="t" style="left:864.50px;top:351.00px;font-size:11px;font-weight:bold;letter-spacing:0.6px;-webkit-text-stroke:0.3px currentColor;color:#000;transform:scaleX(1.0000);">82</div><div class="t" style="left:950.31px;top:351.00px;font-size:11px;font-weight:bold;letter-spacing:0.6px;-webkit-text-stroke:0.3px currentColor;color:#000;transform:scaleX(1.0900);">1434-02-25</div><div style="position:absolute;left:1023px;top:351px;width:98px;height:20px;background:linear-gradient(#f2f2f2,#e6e6e6);border:1px solid #acacac;box-sizing:border-box"></div><div class="t" style="left:1061.30px;top:352.00px;font-size:10px;font-weight:bold;color:#000;transform:scaleX(1.3357);">دفع</div><div style="position:absolute;left:1127px;top:356px;width:11px;height:11px;background:#fdfde6;border:1.5px solid #9a9a00;box-sizing:border-box"></div><div style="position:absolute;left:1121px;top:372px;width:30px;height:21px;background:#fffdd0"></div><div style="position:absolute;left:1151px;top:372px;width:41px;height:21px;background:#fcfcfc"></div><div style="position:absolute;left:1151px;top:393px;width:41px;height:1px;background:#dfe8f3"></div><div style="position:absolute;left:1151px;top:372px;width:1px;height:22px;background:#dfe8f3"></div><div style="position:absolute;left:21px;top:393px;width:1130px;height:1px;background:#a0a0a0"></div><div style="position:absolute;left:24px;top:372px;width:1px;height:22px;background:#a0a0a0"></div><div style="position:absolute;left:174px;top:372px;width:1px;height:22px;background:#a0a0a0"></div><div style="position:absolute;left:274px;top:372px;width:1px;height:22px;background:#a0a0a0"></div><div style="position:absolute;left:371px;top:372px;width:1px;height:22px;background:#a0a0a0"></div><div style="position:absolute;left:471px;top:372px;width:1px;height:22px;background:#a0a0a0"></div><div style="position:absolute;left:621px;top:372px;width:1px;height:22px;background:#a0a0a0"></div><div style="position:absolute;left:721px;top:372px;width:1px;height:22px;background:#a0a0a0"></div><div style="position:absolute;left:821px;top:372px;width:1px;height:22px;background:#a0a0a0"></div><div style="position:absolute;left:921px;top:372px;width:1px;height:22px;background:#a0a0a0"></div><div style="position:absolute;left:1021px;top:372px;width:1px;height:22px;background:#a0a0a0"></div><div style="position:absolute;left:1121px;top:372px;width:1px;height:22px;background:#a0a0a0"></div><div class="t" style="left:26.71px;top:374.00px;font-size:10px;font-weight:bold;color:#000;transform:scaleX(1.2873);">خالد سراج حسن الحسان...</div><div class="t" style="left:185.40px;top:374.00px;font-size:10px;font-weight:bold;color:#000;transform:scaleX(1.2478);">بلال محمد الياس</div><div class="t" style="left:302.50px;top:374.00px;font-size:10px;font-weight:bold;color:#000;transform:scaleX(1.2429);">نماء مكة</div><div style="position:absolute;left:415px;top:376px;width:13px;height:13px;background:#fff;border:1px solid #555;box-sizing:border-box"></div><div class="t" style="left:521.57px;top:373.00px;font-size:11px;font-weight:bold;letter-spacing:0.6px;-webkit-text-stroke:0.3px currentColor;color:#000;transform:scaleX(1.0261);">1,912.00</div><div class="t" style="left:638.60px;top:373.00px;font-size:11px;font-weight:bold;letter-spacing:0.6px;-webkit-text-stroke:0.3px currentColor;color:#000;transform:scaleX(1.0656);">2013-02-05</div><div class="t" style="left:802.52px;top:373.00px;font-size:11px;font-weight:bold;letter-spacing:0.6px;-webkit-text-stroke:0.3px currentColor;color:#000;transform:scaleX(1.1818);">11</div><div class="t" style="left:864.50px;top:373.00px;font-size:11px;font-weight:bold;letter-spacing:0.6px;-webkit-text-stroke:0.3px currentColor;color:#000;transform:scaleX(1.0000);">83</div><div class="t" style="left:950.31px;top:373.00px;font-size:11px;font-weight:bold;letter-spacing:0.6px;-webkit-text-stroke:0.3px currentColor;color:#000;transform:scaleX(1.0900);">1434-03-25</div><div style="position:absolute;left:1023px;top:373px;width:98px;height:20px;background:linear-gradient(#f2f2f2,#e6e6e6);border:1px solid #acacac;box-sizing:border-box"></div><div class="t" style="left:1061.30px;top:374.00px;font-size:10px;font-weight:bold;color:#000;transform:scaleX(1.3357);">دفع</div><div style="position:absolute;left:1127px;top:378px;width:11px;height:11px;background:#fdfde6;border:1.5px solid #9a9a00;box-sizing:border-box"></div><div style="position:absolute;left:1121px;top:394px;width:30px;height:21px;background:#fffdd0"></div><div style="position:absolute;left:1151px;top:394px;width:41px;height:21px;background:#fcfcfc"></div><div style="position:absolute;left:1151px;top:415px;width:41px;height:1px;background:#dfe8f3"></div><div style="position:absolute;left:1151px;top:394px;width:1px;height:22px;background:#dfe8f3"></div><div style="position:absolute;left:21px;top:415px;width:1130px;height:1px;background:#a0a0a0"></div><div style="position:absolute;left:24px;top:394px;width:1px;height:22px;background:#a0a0a0"></div><div style="position:absolute;left:174px;top:394px;width:1px;height:22px;background:#a0a0a0"></div><div style="position:absolute;left:274px;top:394px;width:1px;height:22px;background:#a0a0a0"></div><div style="position:absolute;left:371px;top:394px;width:1px;height:22px;background:#a0a0a0"></div><div style="position:absolute;left:471px;top:394px;width:1px;height:22px;background:#a0a0a0"></div><div style="position:absolute;left:621px;top:394px;width:1px;height:22px;background:#a0a0a0"></div><div style="position:absolute;left:721px;top:394px;width:1px;height:22px;background:#a0a0a0"></div><div style="position:absolute;left:821px;top:394px;width:1px;height:22px;background:#a0a0a0"></div><div style="position:absolute;left:921px;top:394px;width:1px;height:22px;background:#a0a0a0"></div><div style="position:absolute;left:1021px;top:394px;width:1px;height:22px;background:#a0a0a0"></div><div style="position:absolute;left:1121px;top:394px;width:1px;height:22px;background:#a0a0a0"></div><div class="t" style="left:26.71px;top:396.00px;font-size:10px;font-weight:bold;color:#000;transform:scaleX(1.2873);">خالد سراج حسن الحسان...</div><div class="t" style="left:185.40px;top:396.00px;font-size:10px;font-weight:bold;color:#000;transform:scaleX(1.2478);">بلال محمد الياس</div><div class="t" style="left:302.50px;top:396.00px;font-size:10px;font-weight:bold;color:#000;transform:scaleX(1.2429);">نماء مكة</div><div style="position:absolute;left:415px;top:398px;width:13px;height:13px;background:#fff;border:1px solid #555;box-sizing:border-box"></div><div class="t" style="left:521.57px;top:395.00px;font-size:11px;font-weight:bold;letter-spacing:0.6px;-webkit-text-stroke:0.3px currentColor;color:#000;transform:scaleX(1.0261);">1,912.00</div><div class="t" style="left:638.60px;top:395.00px;font-size:11px;font-weight:bold;letter-spacing:0.6px;-webkit-text-stroke:0.3px currentColor;color:#000;transform:scaleX(1.0656);">2013-03-07</div><div class="t" style="left:802.62px;top:395.00px;font-size:11px;font-weight:bold;letter-spacing:0.6px;-webkit-text-stroke:0.3px currentColor;color:#000;transform:scaleX(1.0833);">12</div><div class="t" style="left:864.50px;top:395.00px;font-size:11px;font-weight:bold;letter-spacing:0.6px;-webkit-text-stroke:0.3px currentColor;color:#000;transform:scaleX(1.0000);">84</div><div class="t" style="left:950.31px;top:395.00px;font-size:11px;font-weight:bold;letter-spacing:0.6px;-webkit-text-stroke:0.3px currentColor;color:#000;transform:scaleX(1.0900);">1434-04-25</div><div style="position:absolute;left:1023px;top:395px;width:98px;height:20px;background:linear-gradient(#f2f2f2,#e6e6e6);border:1px solid #acacac;box-sizing:border-box"></div><div class="t" style="left:1061.30px;top:396.00px;font-size:10px;font-weight:bold;color:#000;transform:scaleX(1.3357);">دفع</div><div style="position:absolute;left:1127px;top:400px;width:11px;height:11px;background:#fdfde6;border:1.5px solid #9a9a00;box-sizing:border-box"></div><div style="position:absolute;left:1121px;top:416px;width:30px;height:21px;background:#fffdd0"></div><div style="position:absolute;left:1151px;top:416px;width:41px;height:21px;background:#fcfcfc"></div><div style="position:absolute;left:1151px;top:437px;width:41px;height:1px;background:#dfe8f3"></div><div style="position:absolute;left:1151px;top:416px;width:1px;height:22px;background:#dfe8f3"></div><div style="position:absolute;left:21px;top:437px;width:1130px;height:1px;background:#a0a0a0"></div><div style="position:absolute;left:24px;top:416px;width:1px;height:22px;background:#a0a0a0"></div><div style="position:absolute;left:174px;top:416px;width:1px;height:22px;background:#a0a0a0"></div><div style="position:absolute;left:274px;top:416px;width:1px;height:22px;background:#a0a0a0"></div><div style="position:absolute;left:371px;top:416px;width:1px;height:22px;background:#a0a0a0"></div><div style="position:absolute;left:471px;top:416px;width:1px;height:22px;background:#a0a0a0"></div><div style="position:absolute;left:621px;top:416px;width:1px;height:22px;background:#a0a0a0"></div><div style="position:absolute;left:721px;top:416px;width:1px;height:22px;background:#a0a0a0"></div><div style="position:absolute;left:821px;top:416px;width:1px;height:22px;background:#a0a0a0"></div><div style="position:absolute;left:921px;top:416px;width:1px;height:22px;background:#a0a0a0"></div><div style="position:absolute;left:1021px;top:416px;width:1px;height:22px;background:#a0a0a0"></div><div style="position:absolute;left:1121px;top:416px;width:1px;height:22px;background:#a0a0a0"></div><div class="t" style="left:26.71px;top:418.00px;font-size:10px;font-weight:bold;color:#000;transform:scaleX(1.2873);">خالد سراج حسن الحسان...</div><div class="t" style="left:185.40px;top:418.00px;font-size:10px;font-weight:bold;color:#000;transform:scaleX(1.2478);">بلال محمد الياس</div><div class="t" style="left:302.50px;top:418.00px;font-size:10px;font-weight:bold;color:#000;transform:scaleX(1.2429);">نماء مكة</div><div style="position:absolute;left:415px;top:420px;width:13px;height:13px;background:#fff;border:1px solid #555;box-sizing:border-box"></div><div class="t" style="left:521.57px;top:417.00px;font-size:11px;font-weight:bold;letter-spacing:0.6px;-webkit-text-stroke:0.3px currentColor;color:#000;transform:scaleX(1.0261);">1,912.00</div><div class="t" style="left:638.60px;top:417.00px;font-size:11px;font-weight:bold;letter-spacing:0.6px;-webkit-text-stroke:0.3px currentColor;color:#000;transform:scaleX(1.0656);">2013-04-05</div><div class="t" style="left:802.62px;top:417.00px;font-size:11px;font-weight:bold;letter-spacing:0.6px;-webkit-text-stroke:0.3px currentColor;color:#000;transform:scaleX(1.0833);">13</div><div class="t" style="left:864.50px;top:417.00px;font-size:11px;font-weight:bold;letter-spacing:0.6px;-webkit-text-stroke:0.3px currentColor;color:#000;transform:scaleX(1.0000);">85</div><div class="t" style="left:950.31px;top:417.00px;font-size:11px;font-weight:bold;letter-spacing:0.6px;-webkit-text-stroke:0.3px currentColor;color:#000;transform:scaleX(1.0900);">1434-05-25</div><div style="position:absolute;left:1023px;top:417px;width:98px;height:20px;background:linear-gradient(#f2f2f2,#e6e6e6);border:1px solid #acacac;box-sizing:border-box"></div><div class="t" style="left:1061.30px;top:418.00px;font-size:10px;font-weight:bold;color:#000;transform:scaleX(1.3357);">دفع</div><div style="position:absolute;left:1127px;top:422px;width:11px;height:11px;background:#fdfde6;border:1.5px solid #9a9a00;box-sizing:border-box"></div><div style="position:absolute;left:1121px;top:438px;width:30px;height:21px;background:#fffdd0"></div><div style="position:absolute;left:1151px;top:438px;width:41px;height:21px;background:#fcfcfc"></div><div style="position:absolute;left:1151px;top:459px;width:41px;height:1px;background:#dfe8f3"></div><div style="position:absolute;left:1151px;top:438px;width:1px;height:22px;background:#dfe8f3"></div><div style="position:absolute;left:21px;top:459px;width:1130px;height:1px;background:#a0a0a0"></div><div style="position:absolute;left:24px;top:438px;width:1px;height:22px;background:#a0a0a0"></div><div style="position:absolute;left:174px;top:438px;width:1px;height:22px;background:#a0a0a0"></div><div style="position:absolute;left:274px;top:438px;width:1px;height:22px;background:#a0a0a0"></div><div style="position:absolute;left:371px;top:438px;width:1px;height:22px;background:#a0a0a0"></div><div style="position:absolute;left:471px;top:438px;width:1px;height:22px;background:#a0a0a0"></div><div style="position:absolute;left:621px;top:438px;width:1px;height:22px;background:#a0a0a0"></div><div style="position:absolute;left:721px;top:438px;width:1px;height:22px;background:#a0a0a0"></div><div style="position:absolute;left:821px;top:438px;width:1px;height:22px;background:#a0a0a0"></div><div style="position:absolute;left:921px;top:438px;width:1px;height:22px;background:#a0a0a0"></div><div style="position:absolute;left:1021px;top:438px;width:1px;height:22px;background:#a0a0a0"></div><div style="position:absolute;left:1121px;top:438px;width:1px;height:22px;background:#a0a0a0"></div><div class="t" style="left:26.71px;top:440.00px;font-size:10px;font-weight:bold;color:#000;transform:scaleX(1.2873);">خالد سراج حسن الحسان...</div><div class="t" style="left:185.40px;top:440.00px;font-size:10px;font-weight:bold;color:#000;transform:scaleX(1.2478);">بلال محمد الياس</div><div class="t" style="left:302.50px;top:440.00px;font-size:10px;font-weight:bold;color:#000;transform:scaleX(1.2429);">نماء مكة</div><div style="position:absolute;left:415px;top:442px;width:13px;height:13px;background:#fff;border:1px solid #555;box-sizing:border-box"></div><div class="t" style="left:521.57px;top:439.00px;font-size:11px;font-weight:bold;letter-spacing:0.6px;-webkit-text-stroke:0.3px currentColor;color:#000;transform:scaleX(1.0261);">1,912.00</div><div class="t" style="left:638.60px;top:439.00px;font-size:11px;font-weight:bold;letter-spacing:0.6px;-webkit-text-stroke:0.3px currentColor;color:#000;transform:scaleX(1.0656);">2013-05-05</div><div class="t" style="left:802.62px;top:439.00px;font-size:11px;font-weight:bold;letter-spacing:0.6px;-webkit-text-stroke:0.3px currentColor;color:#000;transform:scaleX(1.0833);">14</div><div class="t" style="left:864.50px;top:439.00px;font-size:11px;font-weight:bold;letter-spacing:0.6px;-webkit-text-stroke:0.3px currentColor;color:#000;transform:scaleX(1.0000);">86</div><div class="t" style="left:950.31px;top:439.00px;font-size:11px;font-weight:bold;letter-spacing:0.6px;-webkit-text-stroke:0.3px currentColor;color:#000;transform:scaleX(1.0900);">1434-06-25</div><div style="position:absolute;left:1023px;top:439px;width:98px;height:20px;background:linear-gradient(#f2f2f2,#e6e6e6);border:1px solid #acacac;box-sizing:border-box"></div><div class="t" style="left:1061.30px;top:440.00px;font-size:10px;font-weight:bold;color:#000;transform:scaleX(1.3357);">دفع</div><div style="position:absolute;left:1127px;top:444px;width:11px;height:11px;background:#fdfde6;border:1.5px solid #9a9a00;box-sizing:border-box"></div><div style="position:absolute;left:1121px;top:460px;width:30px;height:21px;background:#fffdd0"></div><div style="position:absolute;left:1151px;top:460px;width:41px;height:21px;background:#fcfcfc"></div><div style="position:absolute;left:1151px;top:481px;width:41px;height:1px;background:#dfe8f3"></div><div style="position:absolute;left:1151px;top:460px;width:1px;height:22px;background:#dfe8f3"></div><div style="position:absolute;left:21px;top:481px;width:1130px;height:1px;background:#a0a0a0"></div><div style="position:absolute;left:24px;top:460px;width:1px;height:22px;background:#a0a0a0"></div><div style="position:absolute;left:174px;top:460px;width:1px;height:22px;background:#a0a0a0"></div><div style="position:absolute;left:274px;top:460px;width:1px;height:22px;background:#a0a0a0"></div><div style="position:absolute;left:371px;top:460px;width:1px;height:22px;background:#a0a0a0"></div><div style="position:absolute;left:471px;top:460px;width:1px;height:22px;background:#a0a0a0"></div><div style="position:absolute;left:621px;top:460px;width:1px;height:22px;background:#a0a0a0"></div><div style="position:absolute;left:721px;top:460px;width:1px;height:22px;background:#a0a0a0"></div><div style="position:absolute;left:821px;top:460px;width:1px;height:22px;background:#a0a0a0"></div><div style="position:absolute;left:921px;top:460px;width:1px;height:22px;background:#a0a0a0"></div><div style="position:absolute;left:1021px;top:460px;width:1px;height:22px;background:#a0a0a0"></div><div style="position:absolute;left:1121px;top:460px;width:1px;height:22px;background:#a0a0a0"></div><div class="t" style="left:26.71px;top:462.00px;font-size:10px;font-weight:bold;color:#000;transform:scaleX(1.2873);">خالد سراج حسن الحسان...</div><div class="t" style="left:185.40px;top:462.00px;font-size:10px;font-weight:bold;color:#000;transform:scaleX(1.2478);">بلال محمد الياس</div><div class="t" style="left:302.50px;top:462.00px;font-size:10px;font-weight:bold;color:#000;transform:scaleX(1.2429);">نماء مكة</div><div style="position:absolute;left:415px;top:464px;width:13px;height:13px;background:#fff;border:1px solid #555;box-sizing:border-box"></div><div class="t" style="left:521.57px;top:461.00px;font-size:11px;font-weight:bold;letter-spacing:0.6px;-webkit-text-stroke:0.3px currentColor;color:#000;transform:scaleX(1.0261);">1,912.00</div><div class="t" style="left:638.60px;top:461.00px;font-size:11px;font-weight:bold;letter-spacing:0.6px;-webkit-text-stroke:0.3px currentColor;color:#000;transform:scaleX(1.0656);">2013-06-03</div><div class="t" style="left:802.62px;top:461.00px;font-size:11px;font-weight:bold;letter-spacing:0.6px;-webkit-text-stroke:0.3px currentColor;color:#000;transform:scaleX(1.0833);">15</div><div class="t" style="left:864.50px;top:461.00px;font-size:11px;font-weight:bold;letter-spacing:0.6px;-webkit-text-stroke:0.3px currentColor;color:#000;transform:scaleX(1.0000);">87</div><div class="t" style="left:950.31px;top:461.00px;font-size:11px;font-weight:bold;letter-spacing:0.6px;-webkit-text-stroke:0.3px currentColor;color:#000;transform:scaleX(1.0900);">1434-07-25</div><div style="position:absolute;left:1023px;top:461px;width:98px;height:20px;background:linear-gradient(#f2f2f2,#e6e6e6);border:1px solid #acacac;box-sizing:border-box"></div><div class="t" style="left:1061.30px;top:462.00px;font-size:10px;font-weight:bold;color:#000;transform:scaleX(1.3357);">دفع</div><div style="position:absolute;left:1127px;top:466px;width:11px;height:11px;background:#fdfde6;border:1.5px solid #9a9a00;box-sizing:border-box"></div><div style="position:absolute;left:1121px;top:482px;width:30px;height:21px;background:#fffdd0"></div><div style="position:absolute;left:1151px;top:482px;width:41px;height:21px;background:#fcfcfc"></div><div style="position:absolute;left:1151px;top:503px;width:41px;height:1px;background:#dfe8f3"></div><div style="position:absolute;left:1151px;top:482px;width:1px;height:22px;background:#dfe8f3"></div><div style="position:absolute;left:21px;top:503px;width:1130px;height:1px;background:#a0a0a0"></div><div style="position:absolute;left:24px;top:482px;width:1px;height:22px;background:#a0a0a0"></div><div style="position:absolute;left:174px;top:482px;width:1px;height:22px;background:#a0a0a0"></div><div style="position:absolute;left:274px;top:482px;width:1px;height:22px;background:#a0a0a0"></div><div style="position:absolute;left:371px;top:482px;width:1px;height:22px;background:#a0a0a0"></div><div style="position:absolute;left:471px;top:482px;width:1px;height:22px;background:#a0a0a0"></div><div style="position:absolute;left:621px;top:482px;width:1px;height:22px;background:#a0a0a0"></div><div style="position:absolute;left:721px;top:482px;width:1px;height:22px;background:#a0a0a0"></div><div style="position:absolute;left:821px;top:482px;width:1px;height:22px;background:#a0a0a0"></div><div style="position:absolute;left:921px;top:482px;width:1px;height:22px;background:#a0a0a0"></div><div style="position:absolute;left:1021px;top:482px;width:1px;height:22px;background:#a0a0a0"></div><div style="position:absolute;left:1121px;top:482px;width:1px;height:22px;background:#a0a0a0"></div><div class="t" style="left:26.71px;top:484.00px;font-size:10px;font-weight:bold;color:#000;transform:scaleX(1.2873);">خالد سراج حسن الحسان...</div><div class="t" style="left:185.40px;top:484.00px;font-size:10px;font-weight:bold;color:#000;transform:scaleX(1.2478);">بلال محمد الياس</div><div class="t" style="left:302.50px;top:484.00px;font-size:10px;font-weight:bold;color:#000;transform:scaleX(1.2429);">نماء مكة</div><div style="position:absolute;left:415px;top:486px;width:13px;height:13px;background:#fff;border:1px solid #555;box-sizing:border-box"></div><div class="t" style="left:521.57px;top:483.00px;font-size:11px;font-weight:bold;letter-spacing:0.6px;-webkit-text-stroke:0.3px currentColor;color:#000;transform:scaleX(1.0261);">1,912.00</div><div class="t" style="left:638.60px;top:483.00px;font-size:11px;font-weight:bold;letter-spacing:0.6px;-webkit-text-stroke:0.3px currentColor;color:#000;transform:scaleX(1.0656);">2013-07-03</div><div class="t" style="left:802.62px;top:483.00px;font-size:11px;font-weight:bold;letter-spacing:0.6px;-webkit-text-stroke:0.3px currentColor;color:#000;transform:scaleX(1.0833);">16</div><div class="t" style="left:864.50px;top:483.00px;font-size:11px;font-weight:bold;letter-spacing:0.6px;-webkit-text-stroke:0.3px currentColor;color:#000;transform:scaleX(1.0000);">88</div><div class="t" style="left:950.31px;top:483.00px;font-size:11px;font-weight:bold;letter-spacing:0.6px;-webkit-text-stroke:0.3px currentColor;color:#000;transform:scaleX(1.0900);">1434-08-25</div><div style="position:absolute;left:1023px;top:483px;width:98px;height:20px;background:linear-gradient(#f2f2f2,#e6e6e6);border:1px solid #acacac;box-sizing:border-box"></div><div class="t" style="left:1061.30px;top:484.00px;font-size:10px;font-weight:bold;color:#000;transform:scaleX(1.3357);">دفع</div><div style="position:absolute;left:1127px;top:488px;width:11px;height:11px;background:#fdfde6;border:1.5px solid #9a9a00;box-sizing:border-box"></div><div style="position:absolute;left:1121px;top:504px;width:30px;height:21px;background:#fffdd0"></div><div style="position:absolute;left:1151px;top:504px;width:41px;height:21px;background:#fcfcfc"></div><div style="position:absolute;left:1151px;top:525px;width:41px;height:1px;background:#dfe8f3"></div><div style="position:absolute;left:1151px;top:504px;width:1px;height:22px;background:#dfe8f3"></div><div style="position:absolute;left:21px;top:525px;width:1130px;height:1px;background:#a0a0a0"></div><div style="position:absolute;left:24px;top:504px;width:1px;height:22px;background:#a0a0a0"></div><div style="position:absolute;left:174px;top:504px;width:1px;height:22px;background:#a0a0a0"></div><div style="position:absolute;left:274px;top:504px;width:1px;height:22px;background:#a0a0a0"></div><div style="position:absolute;left:371px;top:504px;width:1px;height:22px;background:#a0a0a0"></div><div style="position:absolute;left:471px;top:504px;width:1px;height:22px;background:#a0a0a0"></div><div style="position:absolute;left:621px;top:504px;width:1px;height:22px;background:#a0a0a0"></div><div style="position:absolute;left:721px;top:504px;width:1px;height:22px;background:#a0a0a0"></div><div style="position:absolute;left:821px;top:504px;width:1px;height:22px;background:#a0a0a0"></div><div style="position:absolute;left:921px;top:504px;width:1px;height:22px;background:#a0a0a0"></div><div style="position:absolute;left:1021px;top:504px;width:1px;height:22px;background:#a0a0a0"></div><div style="position:absolute;left:1121px;top:504px;width:1px;height:22px;background:#a0a0a0"></div><div class="t" style="left:26.71px;top:506.00px;font-size:10px;font-weight:bold;color:#000;transform:scaleX(1.2873);">خالد سراج حسن الحسان...</div><div class="t" style="left:185.40px;top:506.00px;font-size:10px;font-weight:bold;color:#000;transform:scaleX(1.2478);">بلال محمد الياس</div><div class="t" style="left:302.50px;top:506.00px;font-size:10px;font-weight:bold;color:#000;transform:scaleX(1.2429);">نماء مكة</div><div style="position:absolute;left:415px;top:508px;width:13px;height:13px;background:#fff;border:1px solid #555;box-sizing:border-box"></div><div class="t" style="left:521.57px;top:505.00px;font-size:11px;font-weight:bold;letter-spacing:0.6px;-webkit-text-stroke:0.3px currentColor;color:#000;transform:scaleX(1.0261);">1,912.00</div><div class="t" style="left:638.60px;top:505.00px;font-size:11px;font-weight:bold;letter-spacing:0.6px;-webkit-text-stroke:0.3px currentColor;color:#000;transform:scaleX(1.0484);">2013-08-01</div><div class="t" style="left:802.62px;top:505.00px;font-size:11px;font-weight:bold;letter-spacing:0.6px;-webkit-text-stroke:0.3px currentColor;color:#000;transform:scaleX(1.0833);">17</div><div class="t" style="left:864.50px;top:505.00px;font-size:11px;font-weight:bold;letter-spacing:0.6px;-webkit-text-stroke:0.3px currentColor;color:#000;transform:scaleX(1.0000);">89</div><div class="t" style="left:950.31px;top:505.00px;font-size:11px;font-weight:bold;letter-spacing:0.6px;-webkit-text-stroke:0.3px currentColor;color:#000;transform:scaleX(1.0900);">1434-09-25</div><div style="position:absolute;left:1023px;top:505px;width:98px;height:20px;background:linear-gradient(#f2f2f2,#e6e6e6);border:1px solid #acacac;box-sizing:border-box"></div><div class="t" style="left:1061.30px;top:506.00px;font-size:10px;font-weight:bold;color:#000;transform:scaleX(1.3357);">دفع</div><div style="position:absolute;left:1127px;top:510px;width:11px;height:11px;background:#fdfde6;border:1.5px solid #9a9a00;box-sizing:border-box"></div><div style="position:absolute;left:1121px;top:526px;width:30px;height:21px;background:#fffdd0"></div><div style="position:absolute;left:1151px;top:526px;width:41px;height:21px;background:#fcfcfc"></div><div style="position:absolute;left:1151px;top:547px;width:41px;height:1px;background:#dfe8f3"></div><div style="position:absolute;left:1151px;top:526px;width:1px;height:22px;background:#dfe8f3"></div><div style="position:absolute;left:21px;top:547px;width:1130px;height:1px;background:#a0a0a0"></div><div style="position:absolute;left:24px;top:526px;width:1px;height:22px;background:#a0a0a0"></div><div style="position:absolute;left:174px;top:526px;width:1px;height:22px;background:#a0a0a0"></div><div style="position:absolute;left:274px;top:526px;width:1px;height:22px;background:#a0a0a0"></div><div style="position:absolute;left:371px;top:526px;width:1px;height:22px;background:#a0a0a0"></div><div style="position:absolute;left:471px;top:526px;width:1px;height:22px;background:#a0a0a0"></div><div style="position:absolute;left:621px;top:526px;width:1px;height:22px;background:#a0a0a0"></div><div style="position:absolute;left:721px;top:526px;width:1px;height:22px;background:#a0a0a0"></div><div style="position:absolute;left:821px;top:526px;width:1px;height:22px;background:#a0a0a0"></div><div style="position:absolute;left:921px;top:526px;width:1px;height:22px;background:#a0a0a0"></div><div style="position:absolute;left:1021px;top:526px;width:1px;height:22px;background:#a0a0a0"></div><div style="position:absolute;left:1121px;top:526px;width:1px;height:22px;background:#a0a0a0"></div><div class="t" style="left:26.71px;top:528.00px;font-size:10px;font-weight:bold;color:#000;transform:scaleX(1.2873);">خالد سراج حسن الحسان...</div><div class="t" style="left:185.40px;top:528.00px;font-size:10px;font-weight:bold;color:#000;transform:scaleX(1.2478);">بلال محمد الياس</div><div class="t" style="left:302.50px;top:528.00px;font-size:10px;font-weight:bold;color:#000;transform:scaleX(1.2429);">نماء مكة</div><div style="position:absolute;left:415px;top:530px;width:13px;height:13px;background:#fff;border:1px solid #555;box-sizing:border-box"></div><div class="t" style="left:521.57px;top:527.00px;font-size:11px;font-weight:bold;letter-spacing:0.6px;-webkit-text-stroke:0.3px currentColor;color:#000;transform:scaleX(1.0261);">1,912.00</div><div class="t" style="left:638.60px;top:527.00px;font-size:11px;font-weight:bold;letter-spacing:0.6px;-webkit-text-stroke:0.3px currentColor;color:#000;transform:scaleX(1.0484);">2013-08-31</div><div class="t" style="left:802.62px;top:527.00px;font-size:11px;font-weight:bold;letter-spacing:0.6px;-webkit-text-stroke:0.3px currentColor;color:#000;transform:scaleX(1.0833);">18</div><div class="t" style="left:864.50px;top:527.00px;font-size:11px;font-weight:bold;letter-spacing:0.6px;-webkit-text-stroke:0.3px currentColor;color:#000;transform:scaleX(1.0000);">90</div><div class="t" style="left:950.31px;top:527.00px;font-size:11px;font-weight:bold;letter-spacing:0.6px;-webkit-text-stroke:0.3px currentColor;color:#000;transform:scaleX(1.0900);">1434-10-25</div><div style="position:absolute;left:1023px;top:527px;width:98px;height:20px;background:linear-gradient(#f2f2f2,#e6e6e6);border:1px solid #acacac;box-sizing:border-box"></div><div class="t" style="left:1061.30px;top:528.00px;font-size:10px;font-weight:bold;color:#000;transform:scaleX(1.3357);">دفع</div><div style="position:absolute;left:1127px;top:532px;width:11px;height:11px;background:#fdfde6;border:1.5px solid #9a9a00;box-sizing:border-box"></div><div style="position:absolute;left:1121px;top:548px;width:30px;height:21px;background:#fffdd0"></div><div style="position:absolute;left:1151px;top:548px;width:41px;height:21px;background:#fcfcfc"></div><div style="position:absolute;left:1151px;top:569px;width:41px;height:1px;background:#dfe8f3"></div><div style="position:absolute;left:1151px;top:548px;width:1px;height:22px;background:#dfe8f3"></div><div style="position:absolute;left:21px;top:569px;width:1130px;height:1px;background:#a0a0a0"></div><div style="position:absolute;left:24px;top:548px;width:1px;height:22px;background:#a0a0a0"></div><div style="position:absolute;left:174px;top:548px;width:1px;height:22px;background:#a0a0a0"></div><div style="position:absolute;left:274px;top:548px;width:1px;height:22px;background:#a0a0a0"></div><div style="position:absolute;left:371px;top:548px;width:1px;height:22px;background:#a0a0a0"></div><div style="position:absolute;left:471px;top:548px;width:1px;height:22px;background:#a0a0a0"></div><div style="position:absolute;left:621px;top:548px;width:1px;height:22px;background:#a0a0a0"></div><div style="position:absolute;left:721px;top:548px;width:1px;height:22px;background:#a0a0a0"></div><div style="position:absolute;left:821px;top:548px;width:1px;height:22px;background:#a0a0a0"></div><div style="position:absolute;left:921px;top:548px;width:1px;height:22px;background:#a0a0a0"></div><div style="position:absolute;left:1021px;top:548px;width:1px;height:22px;background:#a0a0a0"></div><div style="position:absolute;left:1121px;top:548px;width:1px;height:22px;background:#a0a0a0"></div><div class="t" style="left:47.00px;top:550.00px;font-size:10px;font-weight:bold;color:#000;transform:scaleX(1.2439);">بندر مبارك العسيري</div><div class="t" style="left:185.40px;top:550.00px;font-size:10px;font-weight:bold;color:#000;transform:scaleX(1.2478);">بلال محمد الياس</div><div class="t" style="left:302.50px;top:550.00px;font-size:10px;font-weight:bold;color:#000;transform:scaleX(1.2429);">نماء مكة</div><div style="position:absolute;left:415px;top:552px;width:13px;height:13px;background:#fff;border:1px solid #555;box-sizing:border-box"></div><svg style="position:absolute;left:416px;top:553px" width="11" height="11" viewBox="0 0 11 11"><path d="M2 5.5 L4.5 8.5 L9 2" fill="none" stroke="#000" stroke-width="1.8"/></svg><div class="t" style="left:527.30px;top:549.00px;font-size:11px;font-weight:bold;letter-spacing:0.6px;-webkit-text-stroke:0.3px currentColor;color:#000;transform:scaleX(1.0417);">531.00</div><div class="t" style="left:638.60px;top:549.00px;font-size:11px;font-weight:bold;letter-spacing:0.6px;-webkit-text-stroke:0.3px currentColor;color:#000;transform:scaleX(1.0656);">2013-03-07</div><div class="t" style="left:802.52px;top:549.00px;font-size:11px;font-weight:bold;letter-spacing:0.6px;-webkit-text-stroke:0.3px currentColor;color:#000;transform:scaleX(1.1818);">11</div><div class="t" style="left:859.95px;top:549.00px;font-size:11px;font-weight:bold;letter-spacing:0.6px;-webkit-text-stroke:0.3px currentColor;color:#000;transform:scaleX(1.0526);">131</div><div class="t" style="left:950.31px;top:549.00px;font-size:11px;font-weight:bold;letter-spacing:0.6px;-webkit-text-stroke:0.3px currentColor;color:#000;transform:scaleX(1.0900);">1434-04-25</div><div style="position:absolute;left:1023px;top:549px;width:98px;height:20px;background:linear-gradient(#f2f2f2,#e6e6e6);border:1px solid #acacac;box-sizing:border-box"></div><div class="t" style="left:1061.30px;top:550.00px;font-size:10px;font-weight:bold;color:#000;transform:scaleX(1.3357);">دفع</div><div style="position:absolute;left:1127px;top:554px;width:11px;height:11px;background:#fdfde6;border:1.5px solid #9a9a00;box-sizing:border-box"></div><div style="position:absolute;left:1121px;top:570px;width:30px;height:21px;background:#fffdd0"></div><div style="position:absolute;left:1151px;top:570px;width:41px;height:21px;background:#fcfcfc"></div><div style="position:absolute;left:1151px;top:591px;width:41px;height:1px;background:#dfe8f3"></div><div style="position:absolute;left:1151px;top:570px;width:1px;height:22px;background:#dfe8f3"></div><div style="position:absolute;left:21px;top:591px;width:1130px;height:1px;background:#a0a0a0"></div><div style="position:absolute;left:24px;top:570px;width:1px;height:22px;background:#a0a0a0"></div><div style="position:absolute;left:174px;top:570px;width:1px;height:22px;background:#a0a0a0"></div><div style="position:absolute;left:274px;top:570px;width:1px;height:22px;background:#a0a0a0"></div><div style="position:absolute;left:371px;top:570px;width:1px;height:22px;background:#a0a0a0"></div><div style="position:absolute;left:471px;top:570px;width:1px;height:22px;background:#a0a0a0"></div><div style="position:absolute;left:621px;top:570px;width:1px;height:22px;background:#a0a0a0"></div><div style="position:absolute;left:721px;top:570px;width:1px;height:22px;background:#a0a0a0"></div><div style="position:absolute;left:821px;top:570px;width:1px;height:22px;background:#a0a0a0"></div><div style="position:absolute;left:921px;top:570px;width:1px;height:22px;background:#a0a0a0"></div><div style="position:absolute;left:1021px;top:570px;width:1px;height:22px;background:#a0a0a0"></div><div style="position:absolute;left:1121px;top:570px;width:1px;height:22px;background:#a0a0a0"></div><div class="t" style="left:47.00px;top:572.00px;font-size:10px;font-weight:bold;color:#000;transform:scaleX(1.2439);">بندر مبارك العسيري</div><div class="t" style="left:185.40px;top:572.00px;font-size:10px;font-weight:bold;color:#000;transform:scaleX(1.2478);">بلال محمد الياس</div><div class="t" style="left:302.50px;top:572.00px;font-size:10px;font-weight:bold;color:#000;transform:scaleX(1.2429);">نماء مكة</div><div style="position:absolute;left:415px;top:574px;width:13px;height:13px;background:#fff;border:1px solid #555;box-sizing:border-box"></div><div class="t" style="left:527.30px;top:571.00px;font-size:11px;font-weight:bold;letter-spacing:0.6px;-webkit-text-stroke:0.3px currentColor;color:#000;transform:scaleX(1.0417);">531.00</div><div class="t" style="left:638.60px;top:571.00px;font-size:11px;font-weight:bold;letter-spacing:0.6px;-webkit-text-stroke:0.3px currentColor;color:#000;transform:scaleX(1.0656);">2013-04-05</div><div class="t" style="left:802.62px;top:571.00px;font-size:11px;font-weight:bold;letter-spacing:0.6px;-webkit-text-stroke:0.3px currentColor;color:#000;transform:scaleX(1.0833);">12</div><div class="t" style="left:859.89px;top:571.00px;font-size:11px;font-weight:bold;letter-spacing:0.6px;-webkit-text-stroke:0.3px currentColor;color:#000;transform:scaleX(1.1111);">132</div><div class="t" style="left:950.31px;top:571.00px;font-size:11px;font-weight:bold;letter-spacing:0.6px;-webkit-text-stroke:0.3px currentColor;color:#000;transform:scaleX(1.0900);">1434-05-25</div><div style="position:absolute;left:1023px;top:571px;width:98px;height:20px;background:linear-gradient(#f2f2f2,#e6e6e6);border:1px solid #acacac;box-sizing:border-box"></div><div class="t" style="left:1061.30px;top:572.00px;font-size:10px;font-weight:bold;color:#000;transform:scaleX(1.3357);">دفع</div><div style="position:absolute;left:1127px;top:576px;width:11px;height:11px;background:#fdfde6;border:1.5px solid #9a9a00;box-sizing:border-box"></div><div style="position:absolute;left:1121px;top:592px;width:30px;height:21px;background:#fffdd0"></div><div style="position:absolute;left:1151px;top:592px;width:41px;height:21px;background:#fcfcfc"></div><div style="position:absolute;left:1151px;top:613px;width:41px;height:1px;background:#dfe8f3"></div><div style="position:absolute;left:1151px;top:592px;width:1px;height:22px;background:#dfe8f3"></div><div style="position:absolute;left:21px;top:613px;width:1130px;height:1px;background:#a0a0a0"></div><div style="position:absolute;left:24px;top:592px;width:1px;height:22px;background:#a0a0a0"></div><div style="position:absolute;left:174px;top:592px;width:1px;height:22px;background:#a0a0a0"></div><div style="position:absolute;left:274px;top:592px;width:1px;height:22px;background:#a0a0a0"></div><div style="position:absolute;left:371px;top:592px;width:1px;height:22px;background:#a0a0a0"></div><div style="position:absolute;left:471px;top:592px;width:1px;height:22px;background:#a0a0a0"></div><div style="position:absolute;left:621px;top:592px;width:1px;height:22px;background:#a0a0a0"></div><div style="position:absolute;left:721px;top:592px;width:1px;height:22px;background:#a0a0a0"></div><div style="position:absolute;left:821px;top:592px;width:1px;height:22px;background:#a0a0a0"></div><div style="position:absolute;left:921px;top:592px;width:1px;height:22px;background:#a0a0a0"></div><div style="position:absolute;left:1021px;top:592px;width:1px;height:22px;background:#a0a0a0"></div><div style="position:absolute;left:1121px;top:592px;width:1px;height:22px;background:#a0a0a0"></div><div class="t" style="left:47.00px;top:594.00px;font-size:10px;font-weight:bold;color:#000;transform:scaleX(1.2439);">بندر مبارك العسيري</div><div class="t" style="left:185.40px;top:594.00px;font-size:10px;font-weight:bold;color:#000;transform:scaleX(1.2478);">بلال محمد الياس</div><div class="t" style="left:302.50px;top:594.00px;font-size:10px;font-weight:bold;color:#000;transform:scaleX(1.2429);">نماء مكة</div><div style="position:absolute;left:415px;top:596px;width:13px;height:13px;background:#fff;border:1px solid #555;box-sizing:border-box"></div><div class="t" style="left:527.30px;top:593.00px;font-size:11px;font-weight:bold;letter-spacing:0.6px;-webkit-text-stroke:0.3px currentColor;color:#000;transform:scaleX(1.0417);">531.00</div><div class="t" style="left:638.60px;top:593.00px;font-size:11px;font-weight:bold;letter-spacing:0.6px;-webkit-text-stroke:0.3px currentColor;color:#000;transform:scaleX(1.0656);">2013-05-05</div><div class="t" style="left:802.62px;top:593.00px;font-size:11px;font-weight:bold;letter-spacing:0.6px;-webkit-text-stroke:0.3px currentColor;color:#000;transform:scaleX(1.0833);">13</div><div class="t" style="left:859.89px;top:593.00px;font-size:11px;font-weight:bold;letter-spacing:0.6px;-webkit-text-stroke:0.3px currentColor;color:#000;transform:scaleX(1.1111);">133</div><div class="t" style="left:950.31px;top:593.00px;font-size:11px;font-weight:bold;letter-spacing:0.6px;-webkit-text-stroke:0.3px currentColor;color:#000;transform:scaleX(1.0900);">1434-06-25</div><div style="position:absolute;left:1023px;top:593px;width:98px;height:20px;background:linear-gradient(#f2f2f2,#e6e6e6);border:1px solid #acacac;box-sizing:border-box"></div><div class="t" style="left:1061.30px;top:594.00px;font-size:10px;font-weight:bold;color:#000;transform:scaleX(1.3357);">دفع</div><div style="position:absolute;left:1127px;top:598px;width:11px;height:11px;background:#fdfde6;border:1.5px solid #9a9a00;box-sizing:border-box"></div><div style="position:absolute;left:1121px;top:614px;width:30px;height:21px;background:#fffdd0"></div><div style="position:absolute;left:1151px;top:614px;width:41px;height:21px;background:#fcfcfc"></div><div style="position:absolute;left:1151px;top:635px;width:41px;height:1px;background:#dfe8f3"></div><div style="position:absolute;left:1151px;top:614px;width:1px;height:22px;background:#dfe8f3"></div><div style="position:absolute;left:21px;top:635px;width:1130px;height:1px;background:#a0a0a0"></div><div style="position:absolute;left:24px;top:614px;width:1px;height:22px;background:#a0a0a0"></div><div style="position:absolute;left:174px;top:614px;width:1px;height:22px;background:#a0a0a0"></div><div style="position:absolute;left:274px;top:614px;width:1px;height:22px;background:#a0a0a0"></div><div style="position:absolute;left:371px;top:614px;width:1px;height:22px;background:#a0a0a0"></div><div style="position:absolute;left:471px;top:614px;width:1px;height:22px;background:#a0a0a0"></div><div style="position:absolute;left:621px;top:614px;width:1px;height:22px;background:#a0a0a0"></div><div style="position:absolute;left:721px;top:614px;width:1px;height:22px;background:#a0a0a0"></div><div style="position:absolute;left:821px;top:614px;width:1px;height:22px;background:#a0a0a0"></div><div style="position:absolute;left:921px;top:614px;width:1px;height:22px;background:#a0a0a0"></div><div style="position:absolute;left:1021px;top:614px;width:1px;height:22px;background:#a0a0a0"></div><div style="position:absolute;left:1121px;top:614px;width:1px;height:22px;background:#a0a0a0"></div><div class="t" style="left:47.00px;top:616.00px;font-size:10px;font-weight:bold;color:#000;transform:scaleX(1.2439);">بندر مبارك العسيري</div><div class="t" style="left:185.40px;top:616.00px;font-size:10px;font-weight:bold;color:#000;transform:scaleX(1.2478);">بلال محمد الياس</div><div class="t" style="left:302.50px;top:616.00px;font-size:10px;font-weight:bold;color:#000;transform:scaleX(1.2429);">نماء مكة</div><div style="position:absolute;left:415px;top:618px;width:13px;height:13px;background:#fff;border:1px solid #555;box-sizing:border-box"></div><div class="t" style="left:527.30px;top:615.00px;font-size:11px;font-weight:bold;letter-spacing:0.6px;-webkit-text-stroke:0.3px currentColor;color:#000;transform:scaleX(1.0417);">531.00</div><div class="t" style="left:638.60px;top:615.00px;font-size:11px;font-weight:bold;letter-spacing:0.6px;-webkit-text-stroke:0.3px currentColor;color:#000;transform:scaleX(1.0656);">2013-06-03</div><div class="t" style="left:802.62px;top:615.00px;font-size:11px;font-weight:bold;letter-spacing:0.6px;-webkit-text-stroke:0.3px currentColor;color:#000;transform:scaleX(1.0833);">14</div><div class="t" style="left:859.95px;top:615.00px;font-size:11px;font-weight:bold;letter-spacing:0.6px;-webkit-text-stroke:0.3px currentColor;color:#000;transform:scaleX(1.0526);">134</div><div class="t" style="left:950.31px;top:615.00px;font-size:11px;font-weight:bold;letter-spacing:0.6px;-webkit-text-stroke:0.3px currentColor;color:#000;transform:scaleX(1.0900);">1434-07-25</div><div style="position:absolute;left:1023px;top:615px;width:98px;height:20px;background:linear-gradient(#f2f2f2,#e6e6e6);border:1px solid #acacac;box-sizing:border-box"></div><div class="t" style="left:1061.30px;top:616.00px;font-size:10px;font-weight:bold;color:#000;transform:scaleX(1.3357);">دفع</div><div style="position:absolute;left:1127px;top:620px;width:11px;height:11px;background:#fdfde6;border:1.5px solid #9a9a00;box-sizing:border-box"></div></div></div><div style="position:absolute;left:1191px;top:206px;width:1px;height:417px;background:#dde4ee"></div><div style="position:absolute;left:4px;top:623px;width:1188px;height:17px;background:#f0f0f0"></div><div style="position:absolute;left:248px;top:624px;width:497px;height:14px;background:#cdcdcd"></div><svg style="position:absolute;left:26px;top:627px" width="7" height="9" viewBox="0 0 7 9"><path d="M6 1 L2 4.5 L6 8" fill="none" stroke="#606060" stroke-width="2"/></svg><svg style="position:absolute;left:1181px;top:627px" width="7" height="9" viewBox="0 0 7 9"><path d="M1 1 L5 4.5 L1 8" fill="none" stroke="#606060" stroke-width="2"/></svg><div style="position:absolute;left:4px;top:640px;width:1188px;height:1px;background:#000"></div><div style="position:absolute;left:17px;top:666px;width:43px;height:21px;background:linear-gradient(#f2f2f2,#e6e6e6);border:1px solid #acacac;box-sizing:border-box"></div><div style="position:absolute;left:68px;top:666px;width:43px;height:21px;background:linear-gradient(#f2f2f2,#e6e6e6);border:1px solid #acacac;box-sizing:border-box"></div><div style="position:absolute;left:119px;top:666px;width:43px;height:21px;background:linear-gradient(#f2f2f2,#e6e6e6);border:1px solid #acacac;box-sizing:border-box"></div><div style="position:absolute;left:170px;top:666px;width:43px;height:21px;background:linear-gradient(#f2f2f2,#e6e6e6);border:1px solid #3c8ce6;box-sizing:border-box"></div><svg style="position:absolute;left:32px;top:671px" width="10" height="12" viewBox="0 0 10 12"><defs><linearGradient id="ng" x1="0" x2="1" y1="0" y2="1"><stop offset="0" stop-color="#8cbcfa"/><stop offset="0.5" stop-color="#3b78e6"/><stop offset="1" stop-color="#1846c0"/></linearGradient></defs><rect x="0" y="0" width="3" height="12" fill="url(#ng)"/><path d="M9 0 L3.2 5.8 L9 12 Z" fill="url(#ng)"/></svg><svg style="position:absolute;left:85px;top:671px" width="7" height="12" viewBox="0 0 7 12"><defs><linearGradient id="ng" x1="0" x2="1" y1="0" y2="1"><stop offset="0" stop-color="#8cbcfa"/><stop offset="0.5" stop-color="#3b78e6"/><stop offset="1" stop-color="#1846c0"/></linearGradient></defs><path d="M6.5 0 L0.5 6 L6.5 12 Z" fill="url(#ng)"/></svg><svg style="position:absolute;left:137px;top:671px" width="7" height="12" viewBox="0 0 7 12"><defs><linearGradient id="ng" x1="0" x2="1" y1="0" y2="1"><stop offset="0" stop-color="#8cbcfa"/><stop offset="0.5" stop-color="#3b78e6"/><stop offset="1" stop-color="#1846c0"/></linearGradient></defs><path d="M0.3 0 L6.5 6 L0.3 12 Z" fill="url(#ng)"/></svg><svg style="position:absolute;left:188px;top:671px" width="9" height="12" viewBox="0 0 9 12"><defs><linearGradient id="ng" x1="0" x2="1" y1="0" y2="1"><stop offset="0" stop-color="#8cbcfa"/><stop offset="0.5" stop-color="#3b78e6"/><stop offset="1" stop-color="#1846c0"/></linearGradient></defs><path d="M0 0 L6 6 L0 12 Z" fill="url(#ng)"/><rect x="6" y="0" width="3" height="12" fill="url(#ng)"/></svg><div style="position:absolute;left:290px;top:663px;width:99px;height:20px;background:#f0f0f0;border:1px solid #a8a8a8;box-shadow:inset 0 -1px 0 #fff;box-sizing:border-box"></div><div class="t" style="left:292.60px;top:662.00px;font-size:11px;font-weight:bold;letter-spacing:0.6px;-webkit-text-stroke:0.3px currentColor;color:#000;transform:scaleX(1.0300);">72862.38299999</div><div class="t" style="left:261.40px;top:665.00px;font-size:10px;font-weight:bold;color:#000;transform:scaleX(0.9889);">ريال</div><div class="t" style="left:399.00px;top:665.00px;font-size:10px;font-weight:bold;color:#000;transform:scaleX(1.2477);">إجمالي قيم الأقساط المعروضة</div><div style="position:absolute;left:580px;top:662px;width:100px;height:21px;background:#f0f0f0;border:1px solid #a8a8a8;box-shadow:inset 0 -1px 0 #fff;box-sizing:border-box"></div><div class="t" style="left:649.00px;top:662.00px;font-size:11px;font-weight:bold;letter-spacing:0.6px;-webkit-text-stroke:0.3px currentColor;color:#000;transform:scaleX(1.0615);">4068</div><div class="t" style="left:689.00px;top:662.50px;font-size:10px;font-weight:bold;color:#000;transform:scaleX(1.2323);">عدد الأقساط المعروضة</div><div style="position:absolute;left:903px;top:662px;width:134px;height:20px;background:linear-gradient(#f2f2f2,#e6e6e6);border:1px solid #acacac;box-sizing:border-box"></div><div class="t" style="left:937.50px;top:662.60px;font-size:10px;font-weight:bold;color:#000;transform:scaleX(1.2440);">إلغاء التحديد</div><div style="position:absolute;left:1045px;top:662px;width:134px;height:20px;background:linear-gradient(#f2f2f2,#e6e6e6);border:1px solid #acacac;box-sizing:border-box"></div><div class="t" style="left:1052.90px;top:662.60px;font-size:10px;font-weight:bold;color:#000;transform:scaleX(1.2641);">دفع المجموعة المحددة</div>
</body></html>
